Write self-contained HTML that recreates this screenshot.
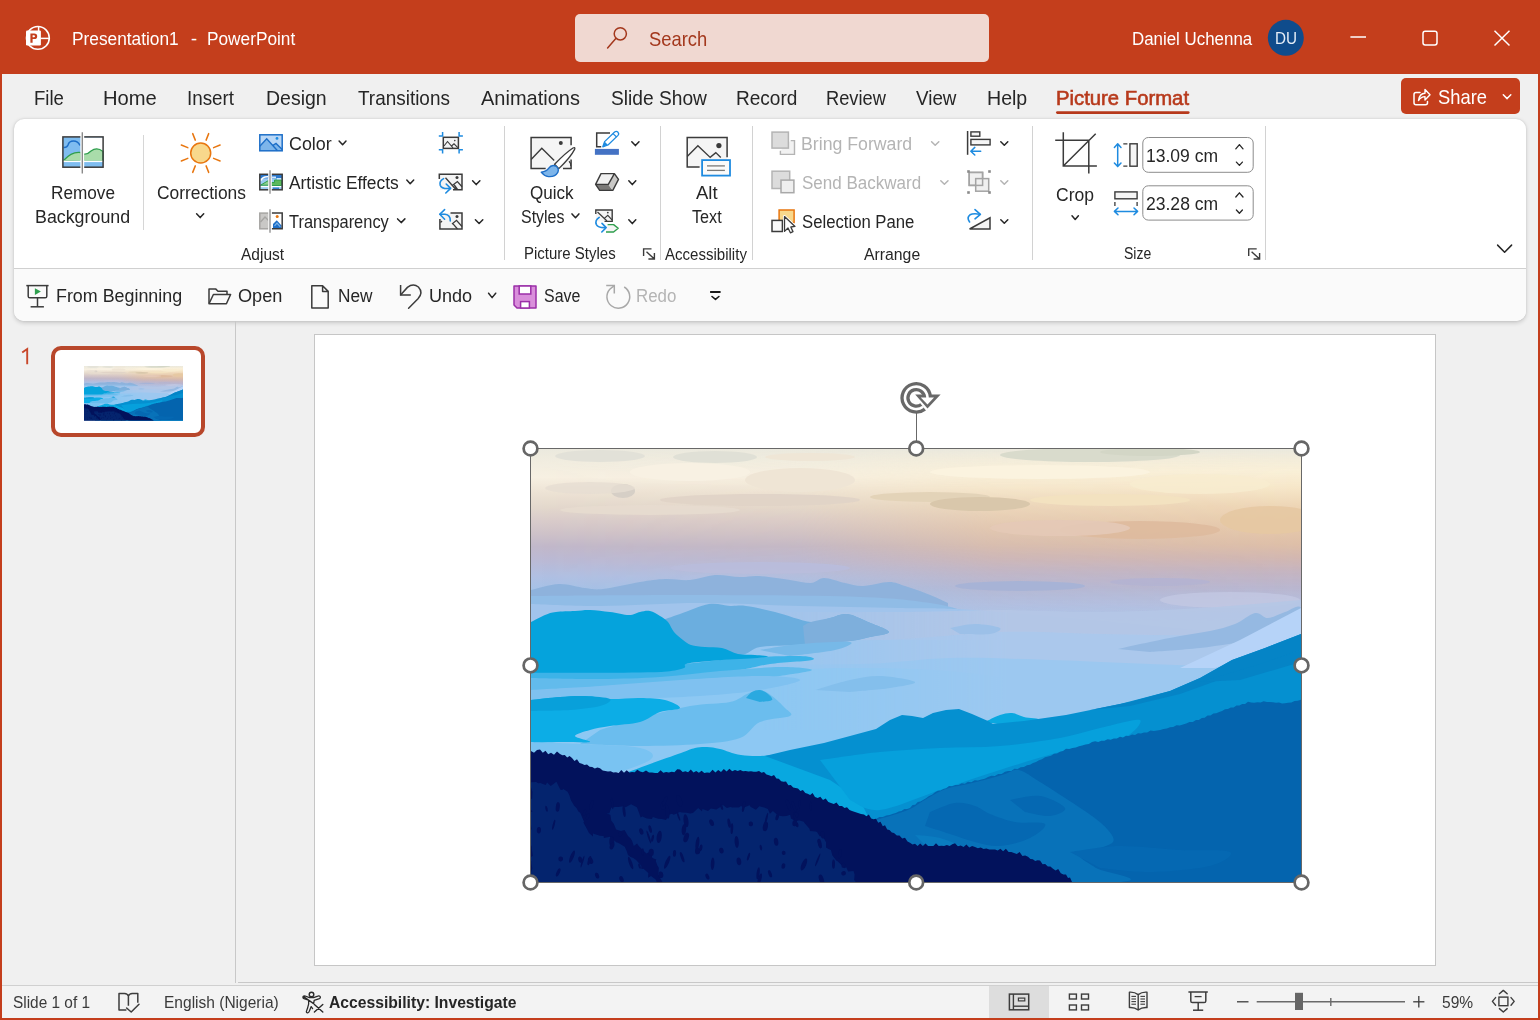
<!DOCTYPE html>
<html><head><meta charset="utf-8"><title>PowerPoint</title>
<style>
*{box-sizing:border-box;margin:0;padding:0}
html,body{width:1540px;height:1020px;overflow:hidden;background:#f0f0f0;font-family:"Liberation Sans",sans-serif;color:#262626}
.a{position:absolute}
.t{position:absolute;white-space:pre;line-height:1;transform-origin:0 0}
#win{position:absolute;left:0;top:0;width:1540px;height:1020px;background:#f0f0f0;overflow:hidden}
#title{left:0;top:0;width:1540px;height:74px;background:#c43e1c}
#search{left:575px;top:14px;width:414px;height:48px;background:#f0d8d1;border-radius:5px}
#ribbon{left:14px;top:119px;width:1512px;height:202px;background:#fff;border-radius:10px;box-shadow:0 1.5px 4px rgba(0,0,0,.17),0 0 2px rgba(0,0,0,.10);overflow:hidden}
#qat{left:0;top:149px;width:1512px;height:53px;background:#fafafa;border-top:1px solid #d0d0d0}
#status{left:2px;top:985px;width:1536px;height:33px;background:#f3f3f3;border-top:1px solid #d0d0d0}
#slide{left:314px;top:334px;width:1122px;height:632px;background:#fff;border:1px solid #c6c6c6}
#thumb{left:51px;top:346px;width:154px;height:91px;background:#fff;border:4.3px solid #b8472b;border-radius:10px}
</style></head><body>
<div id="win">
<div id="title" class="a"></div>
<div id="search" class="a"></div>
<div id="ribbon" class="a"><div id="qat" class="a"></div></div>
<div class="a" style="left:235px;top:321px;width:1px;height:662px;background:#c8c8c8"></div>
<div class="a" style="left:238px;top:982px;width:1300px;height:1px;background:#c8c8c8"></div>
<div id="thumb" class="a"></div>
<svg class="a" style="left:84px;top:366.2px" width="99.2" height="54.8" viewBox="531 449 770 433" preserveAspectRatio="none"><use href="#picg"/></svg>
<div id="slide" class="a"></div>
<svg class="a" style="left:531px;top:449px" width="770" height="433" viewBox="531 449 770 433" preserveAspectRatio="none">
<defs>
<linearGradient id="sky" x1="0" y1="0" x2="0" y2="1">
<stop offset="0" stop-color="#ebe9de"/>
<stop offset="0.03" stop-color="#f1ede0"/>
<stop offset="0.065" stop-color="#f7f0e2"/>
<stop offset="0.10" stop-color="#ede3d5"/>
<stop offset="0.135" stop-color="#e3d8cd"/>
<stop offset="0.165" stop-color="#d9cccb"/>
<stop offset="0.195" stop-color="#cec2c9"/>
<stop offset="0.225" stop-color="#c1b8ca"/>
<stop offset="0.26" stop-color="#babad6"/>
<stop offset="0.295" stop-color="#b0c0e3"/>
<stop offset="0.33" stop-color="#a3c2e8"/>
<stop offset="0.40" stop-color="#a4c6ec"/>
<stop offset="0.50" stop-color="#9ac7f0"/>
<stop offset="0.62" stop-color="#8dc8f3"/>
<stop offset="1" stop-color="#86c6f3"/>
</linearGradient>
<linearGradient id="warmv" x1="0" y1="0" x2="0" y2="1">
<stop offset="0" stop-color="#f7ecd0" stop-opacity="0"/>
<stop offset="0.05" stop-color="#f9efd6" stop-opacity="0.9"/>
<stop offset="0.09" stop-color="#f6e6c8" stop-opacity="1"/>
<stop offset="0.13" stop-color="#eed6b6" stop-opacity="1"/>
<stop offset="0.18" stop-color="#e6c8aa" stop-opacity="1"/>
<stop offset="0.22" stop-color="#debfa8" stop-opacity="1"/>
<stop offset="0.25" stop-color="#d4b7ae" stop-opacity="0.95"/>
<stop offset="0.285" stop-color="#c6b3bd" stop-opacity="0.9"/>
<stop offset="0.32" stop-color="#bdb4ca" stop-opacity="0.85"/>
<stop offset="0.36" stop-color="#babddb" stop-opacity="0.8"/>
<stop offset="0.42" stop-color="#b0c8ea" stop-opacity="0.6"/>
<stop offset="0.5" stop-color="#a4c8ee" stop-opacity="0"/>
</linearGradient>
<linearGradient id="warmh" x1="0" y1="0" x2="1" y2="0">
<stop offset="0" stop-color="#fff" stop-opacity="0"/>
<stop offset="0.35" stop-color="#fff" stop-opacity="0.15"/>
<stop offset="0.6" stop-color="#fff" stop-opacity="0.8"/>
<stop offset="1" stop-color="#fff" stop-opacity="1"/>
</linearGradient>
<mask id="wm"><rect x="531" y="449" width="770" height="433" fill="url(#warmh)"/></mask>
<linearGradient id="rfade" x1="0" y1="0" x2="1" y2="0">
<stop offset="0.3" stop-color="#fff" stop-opacity="0"/>
<stop offset="0.62" stop-color="#fff" stop-opacity="1"/>
</linearGradient>
<mask id="rm"><rect x="531" y="449" width="770" height="433" fill="url(#rfade)"/></mask>
<clipPath id="pc"><rect x="531" y="449" width="770" height="433"/></clipPath>
</defs>
<g id="picg" clip-path="url(#pc)">
<rect x="531" y="449" width="770" height="433" fill="url(#sky)"/>
<rect x="531" y="449" width="770" height="433" fill="url(#warmv)" mask="url(#wm)"/>
<ellipse cx="600" cy="456" rx="45" ry="6" fill="#e2e1d8" opacity="1"/>
<ellipse cx="715" cy="457" rx="42" ry="6" fill="#e0e0d6" opacity="1"/>
<ellipse cx="810" cy="457" rx="45" ry="4" fill="#efe6d6" opacity="1"/>
<ellipse cx="1090" cy="455" rx="90" ry="7" fill="#d9dbcc" opacity="1"/>
<ellipse cx="1150" cy="452" rx="50" ry="4" fill="#d3d6c6" opacity="1"/>
<ellipse cx="690" cy="472" rx="60" ry="9" fill="#f8f1e3" opacity="1"/>
<ellipse cx="800" cy="480" rx="55" ry="12" fill="#efe5d5" opacity="1"/>
<ellipse cx="1040" cy="472" rx="110" ry="7" fill="#fbf3df" opacity="1"/>
<ellipse cx="623" cy="491" rx="12" ry="7" fill="#d6cfc6" opacity="1"/>
<ellipse cx="590" cy="488" rx="45" ry="6" fill="#e6ddd2" opacity="0.8"/>
<ellipse cx="760" cy="500" rx="100" ry="6" fill="#e0d3c6" opacity="0.9"/>
<ellipse cx="930" cy="497" rx="60" ry="5" fill="#e3d3b8" opacity="1"/>
<ellipse cx="980" cy="504" rx="50" ry="7" fill="#d9c7ab" opacity="1"/>
<ellipse cx="1110" cy="500" rx="80" ry="6" fill="#f3e2c0" opacity="1"/>
<ellipse cx="1200" cy="484" rx="70" ry="10" fill="#f7ecd0" opacity="0.8"/>
<ellipse cx="1140" cy="530" rx="80" ry="9" fill="#deba9d" opacity="0.9"/>
<ellipse cx="1270" cy="520" rx="50" ry="14" fill="#e6c8a2" opacity="0.9"/>
<ellipse cx="1060" cy="528" rx="70" ry="8" fill="#e4c9b7" opacity="0.9"/>
<ellipse cx="650" cy="510" rx="90" ry="5" fill="#e7dccf" opacity="0.9"/>
<ellipse cx="1020" cy="586" rx="65" ry="5" fill="#a5b2d6" opacity="0.9"/>
<ellipse cx="1160" cy="582" rx="50" ry="4" fill="#b3b3d2" opacity="0.8"/>
<ellipse cx="760" cy="568" rx="90" ry="6" fill="#b9bcdc" opacity="0.9"/>
<ellipse cx="1230" cy="600" rx="70" ry="8" fill="#c3c8e2" opacity="0.8"/>
<path d="M531.0,590.0 C535.7,589.0 550.0,584.3 559.0,584.0 C568.0,583.7 577.7,587.2 585.0,588.0 C592.3,588.8 593.8,590.0 603.0,589.0 C612.2,588.0 629.7,583.7 640.0,582.0 C650.3,580.3 656.7,579.3 665.0,579.0 C673.3,578.7 681.7,580.7 690.0,580.0 C698.3,579.3 706.7,575.5 715.0,575.0 C723.3,574.5 732.7,576.8 740.0,577.0 C747.3,577.2 750.7,575.5 759.0,576.0 C767.3,576.5 781.3,578.8 790.0,580.0 C798.7,581.2 805.3,583.3 811.0,583.0 C816.7,582.7 818.3,578.0 824.0,578.0 C829.7,578.0 838.5,581.7 845.0,583.0 C851.5,584.3 855.7,586.2 863.0,586.0 C870.3,585.8 882.0,582.0 889.0,582.0 C896.0,582.0 899.8,584.5 905.0,586.0 C910.2,587.5 915.0,589.2 920.0,591.0 C925.0,592.8 930.3,595.0 935.0,597.0 C939.7,599.0 945.8,602.0 948.0,603.0 L948.0,612 L531.0,612 Z" fill="#8eb2dc" />
<path d="M531.0,596.0 C559.2,595.8 645.2,594.8 700.0,595.0 C754.8,595.2 821.7,595.7 860.0,597.0 C898.3,598.3 912.5,600.7 930.0,603.0 C947.5,605.3 959.2,609.7 965.0,611.0 L965.0,614 L531.0,614 Z" fill="#90bce6" />
<path d="M531.0,604.0 C542.5,604.3 571.8,606.2 600.0,606.0 C628.2,605.8 666.7,603.0 700.0,603.0 C733.3,603.0 766.7,605.2 800.0,606.0 C833.3,606.8 866.7,607.0 900.0,608.0 C933.3,609.0 933.2,606.7 1000.0,612.0 C1066.8,617.3 1250.8,635.3 1301.0,640.0 L1301.0,640 L531.0,640 Z" fill="#a1c4ec" />
<rect x="531" y="640" width="770" height="140" fill="#97c6f0"/>
<path d="M531.0,680.0 C550.8,679.7 613.5,679.3 650.0,678.0 C686.5,676.7 716.7,673.7 750.0,672.0 C783.3,670.3 815.0,668.0 850.0,668.0 C885.0,668.0 918.3,668.3 960.0,672.0 C1001.7,675.7 1043.2,687.0 1100.0,690.0 C1156.8,693.0 1267.5,690.0 1301.0,690.0 L1301.0,780 L531.0,780 Z" fill="#8dc8f3" />
<g mask="url(#rm)">
<path d="M531.0,612.0 C559.2,612.0 638.5,612.0 700.0,612.0 C761.5,612.0 850.0,612.3 900.0,612.0 C950.0,611.7 966.7,610.0 1000.0,610.0 C1033.3,610.0 1066.7,612.3 1100.0,612.0 C1133.3,611.7 1166.5,610.0 1200.0,608.0 C1233.5,606.0 1284.2,601.3 1301.0,600.0 L1301.0,700 L531.0,700 Z" fill="#b5c6e6" opacity="0.9"/>
<path d="M531.0,640.0 C559.2,640.0 641.8,640.0 700.0,640.0 C758.2,640.0 830.0,641.3 880.0,640.0 C930.0,638.7 963.3,633.0 1000.0,632.0 C1036.7,631.0 1066.7,633.3 1100.0,634.0 C1133.3,634.7 1166.5,635.0 1200.0,636.0 C1233.5,637.0 1284.2,639.3 1301.0,640.0 L1301.0,700 L531.0,700 Z" fill="#abc8ec" />
<path d="M531.0,664.0 C559.2,664.0 645.2,664.0 700.0,664.0 C754.8,664.0 818.3,665.0 860.0,664.0 C901.7,663.0 918.3,658.7 950.0,658.0 C981.7,657.3 1016.7,659.0 1050.0,660.0 C1083.3,661.0 1116.7,662.7 1150.0,664.0 C1183.3,665.3 1224.8,667.0 1250.0,668.0 C1275.2,669.0 1292.5,669.7 1301.0,670.0 L1301.0,730 L531.0,730 Z" fill="#9cc8f0" />
</g>
<path d="M1118.0,649.0 C1123.3,647.8 1139.7,644.2 1150.0,642.0 C1160.3,639.8 1170.0,637.8 1180.0,636.0 C1190.0,634.2 1200.8,633.0 1210.0,631.0 C1219.2,629.0 1227.5,627.0 1235.0,624.0 C1242.5,621.0 1249.5,614.0 1255.0,613.0 C1260.5,612.0 1263.0,618.2 1268.0,618.0 C1273.0,617.8 1279.5,613.7 1285.0,612.0 C1290.5,610.3 1298.3,603.3 1301.0,608.0 C1303.7,612.7 1307.8,634.7 1301.0,640.0 C1294.2,645.3 1276.8,638.7 1260.0,640.0 C1243.2,641.3 1218.3,646.0 1200.0,648.0 C1181.7,650.0 1158.3,651.3 1150.0,652.0 Z" fill="#95b9e2" />
<path d="M950.0,628.0 C954.2,627.3 966.7,624.0 975.0,624.0 C983.3,624.0 997.5,626.3 1000.0,628.0 C1002.5,629.7 996.7,633.0 990.0,634.0 C983.3,635.0 965.0,634.0 960.0,634.0 Z" fill="#9cc0e8" />
<polygon points="1301.0,608.0 1301.0,640.0 1215.0,668.0 1180.0,668.0 1240.0,640.0" fill="#b6d3f8" />
<path d="M660.0,621.0 C663.3,619.8 671.8,616.8 680.0,614.0 C688.2,611.2 700.7,605.3 709.0,604.0 C717.3,602.7 723.8,605.7 730.0,606.0 C736.2,606.3 738.5,605.0 746.0,606.0 C753.5,607.0 764.2,609.3 775.0,612.0 C785.8,614.7 801.8,621.0 811.0,622.0 C820.2,623.0 824.0,619.3 830.0,618.0 C836.0,616.7 840.7,613.3 847.0,614.0 C853.3,614.7 861.0,619.0 868.0,622.0 C875.0,625.0 888.7,629.5 889.0,632.0 C889.3,634.5 876.5,635.5 870.0,637.0 C863.5,638.5 861.7,639.7 850.0,641.0 C838.3,642.3 815.0,644.0 800.0,645.0 C785.0,646.0 770.0,645.3 760.0,647.0 C750.0,648.7 750.0,654.5 740.0,655.0 C730.0,655.5 710.0,652.5 700.0,650.0 C690.0,647.5 683.3,641.7 680.0,640.0 Z" fill="#6baedf" />
<path d="M803.0,626.0 C804.3,625.3 806.5,623.3 811.0,622.0 C815.5,620.7 824.0,619.3 830.0,618.0 C836.0,616.7 840.7,613.3 847.0,614.0 C853.3,614.7 861.0,619.0 868.0,622.0 C875.0,625.0 888.7,629.5 889.0,632.0 C889.3,634.5 876.5,635.5 870.0,637.0 C863.5,638.5 860.8,639.7 850.0,641.0 C839.2,642.3 812.5,644.3 805.0,645.0 Z" fill="#7eafdc" />
<path d="M760.0,650.0 C766.7,649.0 785.0,645.3 800.0,644.0 C815.0,642.7 844.2,641.0 850.0,642.0 C855.8,643.0 845.0,647.7 835.0,650.0 C825.0,652.3 797.5,655.0 790.0,656.0 Z" fill="#77b9e8" />
<path d="M531.0,664.0 C542.5,664.3 575.2,666.0 600.0,666.0 C624.8,666.0 656.7,665.3 680.0,664.0 C703.3,662.7 720.0,659.3 740.0,658.0 C760.0,656.7 788.0,655.7 800.0,656.0 C812.0,656.3 817.0,658.7 812.0,660.0 C807.0,661.3 782.0,662.3 770.0,664.0 C758.0,665.7 751.7,668.3 740.0,670.0 C728.3,671.7 713.3,672.5 700.0,674.0 C686.7,675.5 676.7,677.8 660.0,679.0 C643.3,680.2 621.5,680.7 600.0,681.0 C578.5,681.3 542.5,681.0 531.0,681.0 Z" fill="#3db3e8" />
<path d="M531.0,678.0 C542.5,678.2 578.5,679.2 600.0,679.0 C621.5,678.8 640.0,678.3 660.0,677.0 C680.0,675.7 700.0,672.7 720.0,671.0 C740.0,669.3 764.7,667.2 780.0,667.0 C795.3,666.8 812.0,668.5 812.0,670.0 C812.0,671.5 792.8,673.8 780.0,676.0 C767.2,678.2 748.3,681.3 735.0,683.0 C721.7,684.7 722.5,684.8 700.0,686.0 C677.5,687.2 628.2,689.3 600.0,690.0 C571.8,690.7 542.5,690.0 531.0,690.0 Z" fill="#62bbec" />
<path d="M531.0,622.0 C533.3,620.8 540.8,616.7 545.0,615.0 C549.2,613.3 551.0,612.7 556.0,612.0 C561.0,611.3 569.3,611.3 575.0,611.0 C580.7,610.7 584.2,609.8 590.0,610.0 C595.8,610.2 603.5,611.2 610.0,612.0 C616.5,612.8 624.0,615.0 629.0,615.0 C634.0,615.0 636.5,612.7 640.0,612.0 C643.5,611.3 646.7,610.3 650.0,611.0 C653.3,611.7 657.0,614.2 660.0,616.0 C663.0,617.8 665.7,619.3 668.0,622.0 C670.3,624.7 671.5,629.0 674.0,632.0 C676.5,635.0 680.2,637.8 683.0,640.0 C685.8,642.2 687.3,643.8 691.0,645.0 C694.7,646.2 699.8,646.5 705.0,647.0 C710.2,647.5 716.5,646.8 722.0,648.0 C727.5,649.2 732.5,652.8 738.0,654.0 C743.5,655.2 750.0,654.6 755.0,655.0 C760.0,655.4 768.8,655.9 768.0,656.5 C767.2,657.1 756.7,658.0 750.0,658.5 C743.3,659.0 735.7,659.0 728.0,659.5 C720.3,660.0 711.0,660.9 704.0,661.6 C697.0,662.4 689.3,662.9 686.0,664.0 C682.7,665.1 687.2,666.8 684.0,668.0 C680.8,669.2 674.3,670.8 667.0,671.5 C659.7,672.2 650.3,672.3 640.0,672.5 C629.7,672.7 618.3,672.7 605.0,672.7 C591.7,672.7 572.3,672.7 560.0,672.7 C547.7,672.7 535.8,672.7 531.0,672.7 Z" fill="#05a3dc" />
<path d="M531.0,690.0 C542.5,689.3 575.2,687.7 600.0,686.0 C624.8,684.3 653.3,681.7 680.0,680.0 C706.7,678.3 740.0,676.0 760.0,676.0 C780.0,676.0 800.0,677.7 800.0,680.0 C800.0,682.3 776.7,687.3 760.0,690.0 C743.3,692.7 726.7,694.3 700.0,696.0 C673.3,697.7 628.2,699.0 600.0,700.0 C571.8,701.0 542.5,701.7 531.0,702.0 Z" fill="#7fc1f0" />
<path d="M600.0,730.0 C606.7,728.0 625.0,722.0 640.0,718.0 C655.0,714.0 675.0,708.7 690.0,706.0 C705.0,703.3 720.5,704.0 730.0,702.0 C739.5,700.0 742.0,696.0 747.0,694.0 C752.0,692.0 755.8,689.7 760.0,690.0 C764.2,690.3 767.8,693.0 772.0,696.0 C776.2,699.0 782.0,704.7 785.0,708.0 C788.0,711.3 794.2,713.7 790.0,716.0 C785.8,718.3 768.3,718.3 760.0,722.0 C751.7,725.7 750.0,734.3 740.0,738.0 C730.0,741.7 716.7,742.7 700.0,744.0 C683.3,745.3 660.0,746.0 640.0,746.0 C620.0,746.0 590.0,744.3 580.0,744.0 Z" fill="#6bbdee" />
<path d="M746.0,698.0 C747.0,697.0 749.7,693.3 752.0,692.0 C754.3,690.7 757.3,689.7 760.0,690.0 C762.7,690.3 766.0,692.3 768.0,694.0 C770.0,695.7 773.3,698.7 772.0,700.0 C770.7,701.3 762.0,701.7 760.0,702.0 Z" fill="#2aa9e0" />
<path d="M815.0,690.0 C820.8,688.3 839.2,682.3 850.0,680.0 C860.8,677.7 869.2,675.7 880.0,676.0 C890.8,676.3 913.3,680.0 915.0,682.0 C916.7,684.0 900.8,686.3 890.0,688.0 C879.2,689.7 856.7,691.3 850.0,692.0 Z" fill="#84bfec" />
<path d="M531.0,700.0 C535.8,699.5 551.0,697.7 560.0,697.0 C569.0,696.3 576.7,695.7 585.0,696.0 C593.3,696.3 600.8,698.7 610.0,699.0 C619.2,699.3 630.8,697.8 640.0,698.0 C649.2,698.2 658.3,698.3 665.0,700.0 C671.7,701.7 680.8,706.0 680.0,708.0 C679.2,710.0 666.7,709.7 660.0,712.0 C653.3,714.3 648.3,719.7 640.0,722.0 C631.7,724.3 618.3,724.7 610.0,726.0 C601.7,727.3 595.8,728.3 590.0,730.0 C584.2,731.7 575.0,734.0 575.0,736.0 C575.0,738.0 592.5,741.0 590.0,742.0 C587.5,743.0 569.8,741.8 560.0,742.0 C550.2,742.2 535.8,742.8 531.0,743.0 Z" fill="#0cade6" />
<path d="M531.0,700.0 C535.8,699.5 551.0,697.7 560.0,697.0 C569.0,696.3 576.7,695.7 585.0,696.0 C593.3,696.3 607.5,697.3 610.0,699.0 C612.5,700.7 606.7,704.2 600.0,706.0 C593.3,707.8 581.5,709.2 570.0,710.0 C558.5,710.8 537.5,710.8 531.0,711.0 Z" fill="#08a0da" />
<path d="M531.0,742.0 C539.2,742.3 561.8,743.0 580.0,744.0 C598.2,745.0 628.3,745.3 640.0,748.0 C651.7,750.7 656.7,755.5 650.0,760.0 C643.3,764.5 619.8,773.3 600.0,775.0 C580.2,776.7 542.5,770.8 531.0,770.0 Z" fill="#79c3f2" />
<path d="M620.0,775.0 C625.0,773.2 639.8,767.7 650.0,764.0 C660.2,760.3 673.5,755.7 681.0,753.0 C688.5,750.3 690.7,749.0 695.0,748.0 C699.3,747.0 702.8,746.8 707.0,747.0 C711.2,747.2 714.3,747.7 720.0,749.0 C725.7,750.3 732.3,754.0 741.0,755.0 C749.7,756.0 758.2,756.7 772.0,755.0 C785.8,753.3 806.7,749.0 824.0,745.0 C841.3,741.0 858.3,734.8 876.0,731.0 C893.7,727.2 909.3,722.8 930.0,722.0 C950.7,721.2 971.7,726.3 1000.0,726.0 C1028.3,725.7 1049.8,726.0 1100.0,720.0 C1150.2,714.0 1267.5,663.0 1301.0,690.0 C1334.5,717.0 1414.5,850.0 1301.0,882.0 C1187.5,914.0 733.5,882.0 620.0,882.0 Z" fill="#08a8e0" />
<path d="M985.0,722.0 C987.5,720.8 995.5,716.5 1000.0,715.0 C1004.5,713.5 1008.0,712.7 1012.0,713.0 C1016.0,713.3 1019.3,715.8 1024.0,717.0 C1028.7,718.2 1042.3,718.5 1040.0,720.0 C1037.7,721.5 1015.0,725.0 1010.0,726.0 Z" fill="#0aa8e0" />
<polygon points="765.0,756.0 790.0,750.0 824.0,743.0 850.0,736.0 876.0,729.0 890.0,720.0 902.0,715.0 912.0,716.0 923.0,718.0 933.0,713.0 946.0,710.0 959.0,709.0 972.0,714.0 988.0,721.0 993.0,724.0 1024.0,721.0 1066.0,715.0 1120.0,704.0 1170.0,691.0 1200.0,678.0 1232.0,660.0 1265.0,648.0 1301.0,634.0 1301.0,882.0 900.0,882.0 860.0,800.0 830.0,780.0" fill="#0590d0" />
<polygon points="1301.0,634.0 1265.0,648.0 1232.0,660.0 1200.0,678.0 1170.0,691.0 1130.0,702.0 1090.0,710.0 1130.0,706.0 1180.0,694.0 1230.0,676.0 1301.0,650.0" fill="#0584c6" />
<polygon points="1301.0,650.0 1260.0,664.0 1200.0,682.0 1240.0,680.0 1301.0,662.0" fill="#0584c6" />
<path d="M820.0,760.0 C830.0,758.7 860.0,754.0 880.0,752.0 C900.0,750.0 920.0,749.0 940.0,748.0 C960.0,747.0 980.0,747.7 1000.0,746.0 C1020.0,744.3 1043.3,741.0 1060.0,738.0 C1076.7,735.0 1086.7,731.0 1100.0,728.0 C1113.3,725.0 1136.7,718.0 1140.0,720.0 C1143.3,722.0 1133.3,734.7 1120.0,740.0 C1106.7,745.3 1080.0,747.0 1060.0,752.0 C1040.0,757.0 1020.0,763.7 1000.0,770.0 C980.0,776.3 960.0,783.3 940.0,790.0 C920.0,796.7 895.0,808.3 880.0,810.0 C865.0,811.7 855.0,801.7 850.0,800.0 Z" fill="#06a0dc" />
<polygon points="1301.0,699.7 1297.8,700.8 1294.6,700.9 1291.4,702.4 1288.2,702.7 1285.0,703.2 1282.0,703.6 1279.0,702.4 1276.0,702.8 1273.0,702.3 1270.0,702.0 1266.9,702.1 1263.7,701.2 1260.6,702.4 1257.4,702.2 1254.3,702.7 1251.1,702.6 1248.0,701.7 1245.1,703.9 1242.2,704.1 1239.4,705.6 1236.5,705.4 1233.6,707.4 1230.8,707.6 1227.9,709.1 1225.0,709.2 1222.1,711.1 1219.2,712.0 1216.3,713.3 1213.4,713.6 1210.5,715.5 1207.6,715.5 1204.7,717.7 1201.8,718.1 1198.9,719.9 1196.0,720.0 1192.8,721.9 1189.5,721.9 1186.2,723.6 1183.0,724.4 1179.8,725.4 1176.5,725.3 1173.2,727.1 1170.0,727.2 1166.8,728.6 1163.5,728.9 1160.2,729.9 1157.0,730.5 1153.8,731.1 1150.5,730.6 1147.2,732.4 1144.0,732.4 1141.0,733.6 1138.0,733.3 1135.0,734.9 1132.0,734.4 1129.0,736.1 1126.0,735.8 1123.0,737.4 1120.0,736.8 1116.9,738.6 1113.8,738.6 1110.7,739.7 1107.6,739.2 1104.4,740.8 1101.3,740.8 1098.2,741.9 1095.1,741.2 1092.0,741.9 1088.8,743.9 1085.5,744.6 1082.2,745.6 1079.0,746.3 1075.8,747.4 1072.5,748.0 1069.2,749.1 1066.0,748.7 1063.0,751.1 1060.0,751.7 1057.0,753.4 1054.0,753.8 1051.0,755.7 1048.0,756.5 1045.0,757.3 1042.0,759.3 1039.0,760.2 1036.0,762.0 1033.0,762.9 1030.0,764.7 1027.0,765.2 1023.9,767.0 1020.7,767.2 1017.6,769.0 1014.4,768.8 1011.3,771.0 1008.1,771.1 1005.0,771.8 1001.6,774.0 998.2,773.9 994.8,776.0 991.4,775.7 988.0,777.1 984.7,778.8 981.3,779.5 978.0,780.5 974.7,780.2 971.3,782.2 968.0,781.7 964.8,783.7 961.7,783.2 958.5,785.0 955.3,784.9 952.2,786.3 949.0,786.1 946.2,788.2 943.4,789.1 940.6,790.6 937.8,790.7 935.0,792.3 932.0,794.8 929.0,796.1 926.0,798.2 923.0,799.9 920.4,801.6 917.8,802.1 915.2,804.8 912.6,805.1 910.0,807.9 907.2,809.0 904.3,809.0 901.5,811.0 898.7,811.5 895.8,813.0 893.0,813.8 889.6,815.0 886.2,815.6 882.8,817.0 879.4,817.0 876.0,819.0 876.0,882.0 1301.0,882.0" fill="#0464ae" />
<path d="M876.0,820.0 C878.8,819.2 887.3,816.8 893.0,815.0 C898.7,813.2 905.0,811.3 910.0,809.0 C915.0,806.7 918.8,803.5 923.0,801.0 C927.2,798.5 930.7,796.2 935.0,794.0 C939.3,791.8 943.5,789.7 949.0,788.0 C954.5,786.3 961.5,785.5 968.0,784.0 C974.5,782.5 981.8,780.7 988.0,779.0 C994.2,777.3 999.8,775.5 1005.0,774.0 C1010.2,772.5 1013.2,768.7 1019.0,770.0 C1024.8,771.3 1032.8,777.7 1040.0,782.0 C1047.2,786.3 1053.3,790.3 1062.0,796.0 C1070.7,801.7 1084.3,810.3 1092.0,816.0 C1099.7,821.7 1104.5,825.7 1108.0,830.0 C1111.5,834.3 1115.2,838.7 1113.0,842.0 C1110.8,845.3 1100.5,847.7 1095.0,850.0 C1089.5,852.3 1079.8,853.0 1080.0,856.0 C1080.2,859.0 1089.7,863.7 1096.0,868.0 C1102.3,872.3 1154.7,879.7 1118.0,882.0 C1081.3,884.3 916.3,882.0 876.0,882.0 Z" fill="#0872b9" />
<path d="M930.0,812.0 C934.2,810.5 947.5,804.0 955.0,803.0 C962.5,802.0 969.2,804.2 975.0,806.0 C980.8,807.8 983.3,811.3 990.0,814.0 C996.7,816.7 1005.8,820.3 1015.0,822.0 C1024.2,823.7 1042.5,821.3 1045.0,824.0 C1047.5,826.7 1037.5,834.3 1030.0,838.0 C1022.5,841.7 1009.2,845.3 1000.0,846.0 C990.8,846.7 983.3,844.0 975.0,842.0 C966.7,840.0 958.3,836.7 950.0,834.0 C941.7,831.3 929.2,827.3 925.0,826.0 Z" fill="#0568b2" />
<path d="M1010.0,800.0 C1015.0,799.3 1030.8,794.7 1040.0,796.0 C1049.2,797.3 1063.3,804.7 1065.0,808.0 C1066.7,811.3 1056.7,815.3 1050.0,816.0 C1043.3,816.7 1029.2,812.7 1025.0,812.0 Z" fill="#0568b2" />
<path d="M915.0,835.0 C919.2,835.5 931.7,835.8 940.0,838.0 C948.3,840.2 957.5,844.7 965.0,848.0 C972.5,851.3 985.8,855.7 985.0,858.0 C984.2,860.3 969.2,863.3 960.0,862.0 C950.8,860.7 935.0,852.0 930.0,850.0 Z" fill="#0a7cc0" />
<path d="M1070.0,852.0 C1078.3,851.0 1101.7,846.3 1120.0,846.0 C1138.3,845.7 1161.7,849.0 1180.0,850.0 C1198.3,851.0 1225.0,849.3 1230.0,852.0 C1235.0,854.7 1223.3,862.7 1210.0,866.0 C1196.7,869.3 1168.3,871.7 1150.0,872.0 C1131.7,872.3 1108.3,868.7 1100.0,868.0 Z" fill="#0568b2" />
<polygon points="531.0,751.1 534.0,752.7 537.0,750.1 540.0,749.6 542.8,752.8 545.5,750.7 548.2,754.2 551.0,752.8 554.0,754.7 557.0,751.6 560.0,753.9 562.4,755.2 564.8,755.0 567.2,757.6 569.6,756.0 572.0,758.1 574.5,761.0 577.0,759.3 579.5,763.0 582.0,763.7 584.5,765.0 587.0,764.6 589.6,766.8 592.2,766.9 594.8,768.4 597.4,767.6 600.0,768.3 602.7,770.5 605.3,771.0 608.0,771.5 610.7,771.3 613.3,772.5 616.0,772.2 618.7,772.9 621.3,770.0 624.0,772.7 626.7,770.3 629.3,772.4 632.0,771.9 634.7,772.2 637.3,769.7 640.0,771.6 643.0,772.2 646.0,770.5 649.0,772.6 652.0,772.4 655.0,773.0 657.8,772.9 660.6,770.2 663.3,772.7 666.1,771.9 668.9,772.4 671.7,771.7 674.4,772.2 677.2,769.2 680.0,769.4 682.7,772.1 685.4,771.3 688.1,772.3 690.8,769.5 693.5,772.5 696.2,771.0 698.9,772.7 701.6,770.8 704.3,772.9 707.0,772.4 709.8,772.8 712.6,769.8 715.4,772.4 718.2,770.1 721.0,772.0 723.8,768.9 726.6,771.6 729.4,768.7 732.2,771.2 735.0,770.1 737.7,771.1 740.3,770.1 743.0,771.3 745.7,770.9 748.3,771.6 751.0,771.2 753.7,771.8 756.3,771.7 759.0,771.1 761.5,772.8 764.0,771.9 766.5,774.5 769.0,775.3 771.5,776.2 774.0,775.0 776.4,778.4 778.8,778.8 781.2,781.2 783.6,781.7 786.0,781.5 788.4,785.2 790.8,785.0 793.2,787.6 795.6,787.9 798.0,788.6 800.4,791.0 802.9,789.9 805.3,793.0 807.7,793.8 810.1,795.0 812.6,793.1 815.0,796.9 817.7,798.0 820.3,796.8 823.0,800.0 825.7,798.5 828.3,802.0 831.0,802.9 833.8,804.0 836.5,802.6 839.2,806.0 842.0,805.9 844.5,808.0 847.0,807.3 849.5,810.0 852.0,811.0 855.0,812.0 858.0,812.9 861.0,814.0 864.0,814.5 866.4,816.2 868.8,814.5 871.2,818.6 873.6,819.2 876.0,818.7 878.2,822.8 880.5,821.7 882.8,826.2 885.0,825.2 887.2,829.5 889.5,830.0 891.8,832.5 894.0,832.9 896.8,835.5 899.5,835.4 902.2,838.5 905.0,837.7 907.5,841.5 910.0,842.7 912.5,844.5 915.0,843.8 917.6,846.0 920.2,843.6 922.9,846.0 925.5,843.4 928.1,846.0 930.8,845.9 933.4,846.0 936.0,843.2 938.7,846.0 941.4,845.7 944.1,846.0 946.9,845.0 949.6,846.0 952.3,844.2 955.0,843.2 957.9,846.3 960.7,845.6 963.6,846.9 966.4,844.4 969.3,847.4 972.1,846.1 975.0,847.1 977.9,848.3 980.7,847.6 983.6,848.9 986.4,848.6 989.3,849.4 992.1,849.5 995.0,849.6 997.7,850.4 1000.4,848.8 1003.1,851.3 1005.9,848.7 1008.6,852.1 1011.3,852.1 1014.0,852.9 1016.8,854.0 1019.6,852.0 1022.4,856.0 1025.2,855.4 1028.0,856.8 1030.4,859.0 1032.8,859.3 1035.2,861.0 1037.6,860.2 1040.0,860.5 1042.6,864.2 1045.2,864.0 1047.8,866.6 1050.4,866.5 1053.0,868.8 1055.6,870.4 1058.2,869.1 1060.8,873.2 1063.4,874.5 1066.0,874.5 1068.0,878.0 1070.0,877.5 1072.0,882.0 1072.0,882.0 531.0,882.0" fill="#02125c" />
<clipPath id="fc"><polygon points="531.0,753.0 540.0,752.0 551.0,755.0 560.0,754.0 572.0,760.0 587.0,766.0 600.0,770.0 616.0,773.0 640.0,772.0 655.0,773.0 680.0,772.0 707.0,773.0 735.0,771.0 759.0,772.0 774.0,777.0 786.0,784.0 798.0,790.0 815.0,797.0 831.0,803.0 842.0,807.0 852.0,811.0 864.0,815.0 876.0,821.0 885.0,828.0 894.0,834.0 905.0,840.0 915.0,846.0 936.0,846.0 955.0,846.0 975.0,848.0 995.0,850.0 1014.0,853.0 1028.0,858.0 1040.0,863.0 1053.0,869.0 1066.0,876.0 1072.0,882.0 1072.0,882.0 531.0,882.0"/></clipPath><g clip-path="url(#fc)">
<polygon points="530.8,782.3 536.1,782.1 538.1,783.2 540.4,783.1 545.6,785.1 547.2,782.6 550.7,785.9 556.4,781.7 560.4,789.7 562.2,790.1 563.3,788.9 567.6,791.7 569.4,795.2 570.8,800.0 574.2,805.8 576.5,808.0 578.4,811.6 580.2,812.7 583.4,820.3 584.1,821.9 583.4,822.3 584.6,824.7 587.5,829.9 589.0,833.1 593.0,836.6 593.0,833.5 599.8,835.8 603.6,836.0 603.9,838.1 610.0,836.7 611.0,837.8 616.9,842.8 616.7,842.2 619.4,843.5 624.7,846.7 626.6,850.8 628.0,855.0 630.6,856.9 633.3,858.0 636.1,859.9 641.3,865.8 641.4,869.0 643.5,868.7 648.3,872.9 648.1,877.8 651.0,876.1 655.4,879.2 656.2,880.4 657.9,886.2 654.9,886.3 651.8,885.4 650.3,885.6 645.4,887.9 640.4,883.6 639.5,887.6 633.5,883.8 631.7,888.3 626.2,888.4 625.1,886.3 619.9,883.3 614.9,888.5 612.1,886.9 608.6,887.6 606.2,884.4 601.2,887.0 597.2,884.0 595.4,887.8 592.0,884.4 589.6,883.9 582.8,884.3 580.7,883.0 576.2,884.9 574.1,883.5 569.7,888.0 568.4,886.6 563.8,886.2 558.2,882.9 554.2,888.1 553.1,888.5 547.1,886.5 545.2,887.1 541.0,888.7 536.6,886.0 535.4,888.1 531.9,886.9 532.1,884.6 530.5,879.6 532.4,877.2 530.7,873.1 532.3,868.2 531.4,863.5 531.3,861.3 529.5,857.9 532.8,855.8 531.8,849.2 531.8,846.8 530.8,844.8 529.5,840.7 529.3,836.2 530.9,830.4 531.7,828.4 531.4,827.4 530.1,818.4 530.3,818.8 529.9,812.2 532.5,811.5 530.8,809.4 530.4,804.4 529.9,799.4 532.1,798.8 532.4,792.0 531.3,788.0 529.7,785.5" fill="#04246e" />
<polygon points="606.3,813.7 609.4,813.2 611.3,807.5 615.5,807.1 618.2,806.9 623.2,806.3 625.6,807.3 631.5,803.9 631.1,804.3 636.9,807.2 639.2,813.3 640.6,817.5 642.4,816.4 646.9,818.6 651.8,819.1 652.9,817.1 658.2,818.7 661.8,819.1 666.0,820.1 669.1,814.7 671.9,813.8 673.8,814.7 679.9,812.1 681.9,812.4 686.9,812.8 690.1,813.5 692.9,813.0 698.2,808.1 701.9,811.2 702.5,808.9 708.0,811.1 710.8,808.6 716.3,809.4 720.3,806.9 722.9,804.9 726.9,808.1 730.3,807.0 732.4,807.6 738.9,807.6 741.0,805.9 743.9,807.6 749.6,805.3 750.5,806.8 755.9,809.8 759.3,806.3 764.2,807.5 767.9,809.1 769.9,813.8 772.9,811.0 778.0,815.4 782.7,816.3 786.6,816.1 790.1,814.8 791.0,818.5 794.8,820.7 799.6,820.6 803.8,821.8 804.7,823.2 809.5,828.8 810.0,831.0 815.6,831.5 817.0,832.0 819.7,836.3 822.7,835.9 826.0,842.3 826.0,847.5 828.5,849.1 830.9,850.0 832.4,855.5 836.7,861.1 837.0,860.8 839.4,863.1 844.7,868.3 846.3,867.3 848.1,871.6 853.5,871.1 854.6,874.6 854.2,879.9 857.6,884.6 852.9,886.4 848.5,887.1 845.1,885.7 842.0,883.9 839.5,885.3 835.5,885.2 832.5,883.6 827.8,886.5 825.9,885.9 823.2,886.3 819.7,884.1 815.8,887.5 812.9,884.6 807.2,888.2 803.4,888.7 802.3,883.5 796.5,887.0 793.0,883.3 791.6,885.2 787.9,883.4 783.0,886.8 778.2,883.9 777.0,888.1 774.6,883.4 769.4,887.2 765.9,886.8 761.3,883.1 757.5,882.9 755.6,885.8 752.1,883.6 747.2,883.9 746.1,888.6 742.9,883.3 736.3,888.4 734.2,887.3 730.2,885.5 727.4,885.3 724.2,882.8 721.1,887.7 715.7,885.4 714.2,885.1 708.8,883.7 706.4,882.8 704.3,887.5 700.1,887.8 696.3,885.1 692.7,885.7 690.6,887.5 684.5,888.1 682.7,887.3 679.5,885.1 676.3,888.0 672.0,887.3 668.8,885.1 665.1,883.1 662.5,882.1 660.1,878.0 661.1,876.2 658.4,874.8 658.8,867.7 657.5,865.7 655.8,861.3 656.3,859.4 652.4,858.0 650.5,851.4 646.4,853.6 642.3,849.5 638.7,846.1 637.1,843.4 633.8,846.1 632.1,840.9 630.7,838.5 628.0,836.1 624.5,829.9 620.9,831.1 616.1,829.4 613.7,823.8 611.3,820.8 610.4,815.1 609.1,814.2" fill="#04246e" />
<ellipse cx="700.9" cy="847.8" rx="1.5" ry="3.4" fill="#02125c" transform="rotate(8 700.9 847.8)"/>
<ellipse cx="711.6" cy="822.7" rx="2.1" ry="3.5" fill="#02125c" transform="rotate(-24 711.6 822.7)"/>
<ellipse cx="612.2" cy="803.4" rx="1.1" ry="5.8" fill="#02125c" transform="rotate(-6 612.2 803.4)"/>
<ellipse cx="817.7" cy="859.9" rx="0.9" ry="6.9" fill="#02125c" transform="rotate(22 817.7 859.9)"/>
<ellipse cx="558.2" cy="872.4" rx="1.6" ry="4.4" fill="#02125c" transform="rotate(24 558.2 872.4)"/>
<ellipse cx="611.8" cy="841.9" rx="2.5" ry="5.6" fill="#02125c" transform="rotate(-2 611.8 841.9)"/>
<ellipse cx="843.3" cy="865.3" rx="1.9" ry="2.6" fill="#02125c" transform="rotate(6 843.3 865.3)"/>
<ellipse cx="678.5" cy="816.3" rx="0.9" ry="4.6" fill="#02125c" transform="rotate(-19 678.5 816.3)"/>
<ellipse cx="674.5" cy="853.4" rx="1.6" ry="3.3" fill="#02125c" transform="rotate(4 674.5 853.4)"/>
<ellipse cx="667.2" cy="862.2" rx="1.8" ry="7.0" fill="#02125c" transform="rotate(23 667.2 862.2)"/>
<ellipse cx="766.3" cy="819.1" rx="1.0" ry="6.5" fill="#02125c" transform="rotate(14 766.3 819.1)"/>
<ellipse cx="731.9" cy="828.7" rx="1.3" ry="5.4" fill="#02125c" transform="rotate(3 731.9 828.7)"/>
<ellipse cx="721.4" cy="850.6" rx="2.2" ry="2.9" fill="#02125c" transform="rotate(-13 721.4 850.6)"/>
<ellipse cx="843.6" cy="873.3" rx="2.4" ry="2.2" fill="#02125c" transform="rotate(-22 843.6 873.3)"/>
<ellipse cx="620.3" cy="834.0" rx="1.9" ry="2.5" fill="#02125c" transform="rotate(2 620.3 834.0)"/>
<ellipse cx="557.8" cy="806.9" rx="2.0" ry="4.8" fill="#02125c" transform="rotate(7 557.8 806.9)"/>
<ellipse cx="652.6" cy="838.3" rx="1.2" ry="3.7" fill="#02125c" transform="rotate(12 652.6 838.3)"/>
<ellipse cx="799.1" cy="805.9" rx="1.0" ry="6.0" fill="#02125c" transform="rotate(6 799.1 805.9)"/>
<ellipse cx="777.2" cy="817.1" rx="1.6" ry="3.3" fill="#02125c" transform="rotate(15 777.2 817.1)"/>
<ellipse cx="651.2" cy="852.3" rx="2.6" ry="3.6" fill="#02125c" transform="rotate(2 651.2 852.3)"/>
<ellipse cx="770.0" cy="873.7" rx="1.6" ry="3.8" fill="#02125c" transform="rotate(-20 770.0 873.7)"/>
<ellipse cx="810.7" cy="806.3" rx="0.9" ry="4.8" fill="#02125c" transform="rotate(-1 810.7 806.3)"/>
<ellipse cx="750.9" cy="823.9" rx="2.2" ry="2.4" fill="#02125c" transform="rotate(-14 750.9 823.9)"/>
<ellipse cx="743.6" cy="806.5" rx="1.3" ry="5.6" fill="#02125c" transform="rotate(10 743.6 806.5)"/>
<ellipse cx="624.1" cy="811.4" rx="1.4" ry="5.6" fill="#02125c" transform="rotate(-7 624.1 811.4)"/>
<ellipse cx="572.0" cy="856.7" rx="1.8" ry="6.6" fill="#02125c" transform="rotate(22 572.0 856.7)"/>
<ellipse cx="822.7" cy="835.0" rx="2.2" ry="3.5" fill="#02125c" transform="rotate(-9 822.7 835.0)"/>
<ellipse cx="660.9" cy="874.8" rx="2.4" ry="3.2" fill="#02125c" transform="rotate(-7 660.9 874.8)"/>
<ellipse cx="650.2" cy="829.1" rx="1.5" ry="3.9" fill="#02125c" transform="rotate(-15 650.2 829.1)"/>
<ellipse cx="712.6" cy="863.8" rx="1.8" ry="6.2" fill="#02125c" transform="rotate(3 712.6 863.8)"/>
<ellipse cx="590.6" cy="860.7" rx="2.4" ry="3.4" fill="#02125c" transform="rotate(-24 590.6 860.7)"/>
<ellipse cx="697.4" cy="843.5" rx="1.8" ry="6.8" fill="#02125c" transform="rotate(8 697.4 843.5)"/>
<ellipse cx="788.4" cy="805.1" rx="1.8" ry="5.9" fill="#02125c" transform="rotate(-21 788.4 805.1)"/>
<ellipse cx="560.7" cy="859.0" rx="2.4" ry="2.4" fill="#02125c" transform="rotate(7 560.7 859.0)"/>
<ellipse cx="580.3" cy="859.7" rx="2.0" ry="3.2" fill="#02125c" transform="rotate(-14 580.3 859.7)"/>
<ellipse cx="776.1" cy="841.7" rx="2.2" ry="4.0" fill="#02125c" transform="rotate(-8 776.1 841.7)"/>
<ellipse cx="840.0" cy="853.8" rx="1.7" ry="4.7" fill="#02125c" transform="rotate(11 840.0 853.8)"/>
<ellipse cx="758.1" cy="873.2" rx="1.5" ry="6.1" fill="#02125c" transform="rotate(8 758.1 873.2)"/>
<ellipse cx="803.9" cy="864.5" rx="2.3" ry="6.4" fill="#02125c" transform="rotate(23 803.9 864.5)"/>
<ellipse cx="736.7" cy="841.9" rx="2.1" ry="6.0" fill="#02125c" transform="rotate(-4 736.7 841.9)"/>
<ellipse cx="667.4" cy="811.7" rx="2.1" ry="7.0" fill="#02125c" transform="rotate(-6 667.4 811.7)"/>
<ellipse cx="587.8" cy="816.3" rx="1.6" ry="3.5" fill="#02125c" transform="rotate(23 587.8 816.3)"/>
<ellipse cx="553.7" cy="824.7" rx="1.0" ry="5.2" fill="#02125c" transform="rotate(14 553.7 824.7)"/>
<ellipse cx="591.5" cy="805.0" rx="1.6" ry="4.9" fill="#02125c" transform="rotate(20 591.5 805.0)"/>
<ellipse cx="546.5" cy="808.7" rx="1.1" ry="3.1" fill="#02125c" transform="rotate(-13 546.5 808.7)"/>
<ellipse cx="760.9" cy="847.6" rx="1.2" ry="2.9" fill="#02125c" transform="rotate(-11 760.9 847.6)"/>
<ellipse cx="589.3" cy="860.6" rx="1.4" ry="4.7" fill="#02125c" transform="rotate(16 589.3 860.6)"/>
<ellipse cx="686.0" cy="820.8" rx="2.4" ry="6.6" fill="#02125c" transform="rotate(-8 686.0 820.8)"/>
<ellipse cx="707.4" cy="876.6" rx="1.7" ry="3.1" fill="#02125c" transform="rotate(-23 707.4 876.6)"/>
<ellipse cx="833.5" cy="864.1" rx="1.5" ry="4.6" fill="#02125c" transform="rotate(1 833.5 864.1)"/>
<ellipse cx="621.5" cy="879.2" rx="2.0" ry="3.2" fill="#02125c" transform="rotate(-24 621.5 879.2)"/>
<ellipse cx="683.9" cy="829.7" rx="2.2" ry="5.6" fill="#02125c" transform="rotate(5 683.9 829.7)"/>
<ellipse cx="584.5" cy="812.6" rx="1.4" ry="3.3" fill="#02125c" transform="rotate(18 584.5 812.6)"/>
<ellipse cx="697.6" cy="851.0" rx="2.6" ry="3.3" fill="#02125c" transform="rotate(2 697.6 851.0)"/>
<ellipse cx="582.5" cy="861.6" rx="0.8" ry="6.1" fill="#02125c" transform="rotate(17 582.5 861.6)"/>
<ellipse cx="794.0" cy="806.6" rx="1.3" ry="5.6" fill="#02125c" transform="rotate(-20 794.0 806.6)"/>
<ellipse cx="686.2" cy="837.5" rx="2.5" ry="4.9" fill="#02125c" transform="rotate(18 686.2 837.5)"/>
<ellipse cx="630.6" cy="863.1" rx="1.6" ry="6.6" fill="#02125c" transform="rotate(-20 630.6 863.1)"/>
<ellipse cx="795.3" cy="816.7" rx="1.8" ry="4.6" fill="#02125c" transform="rotate(-17 795.3 816.7)"/>
<ellipse cx="797.1" cy="824.9" rx="1.4" ry="2.4" fill="#02125c" transform="rotate(-10 797.1 824.9)"/>
<ellipse cx="682.2" cy="857.2" rx="1.4" ry="5.4" fill="#02125c" transform="rotate(-20 682.2 857.2)"/>
<ellipse cx="659.2" cy="836.9" rx="2.5" ry="6.1" fill="#02125c" transform="rotate(8 659.2 836.9)"/>
<ellipse cx="538.9" cy="830.2" rx="2.1" ry="3.2" fill="#02125c" transform="rotate(3 538.9 830.2)"/>
<ellipse cx="679.3" cy="800.8" rx="2.6" ry="6.0" fill="#02125c" transform="rotate(-15 679.3 800.8)"/>
<ellipse cx="729.1" cy="823.2" rx="1.5" ry="4.7" fill="#02125c" transform="rotate(-10 729.1 823.2)"/>
<ellipse cx="641.3" cy="831.4" rx="2.0" ry="3.3" fill="#02125c" transform="rotate(-15 641.3 831.4)"/>
<ellipse cx="765.4" cy="826.4" rx="2.5" ry="4.8" fill="#02125c" transform="rotate(11 765.4 826.4)"/>
<ellipse cx="639.5" cy="866.2" rx="1.0" ry="2.7" fill="#02125c" transform="rotate(-20 639.5 866.2)"/>
<ellipse cx="748.5" cy="856.7" rx="1.1" ry="4.0" fill="#02125c" transform="rotate(17 748.5 856.7)"/>
<ellipse cx="721.7" cy="807.2" rx="1.2" ry="2.8" fill="#02125c" transform="rotate(-19 721.7 807.2)"/>
<ellipse cx="663.2" cy="805.8" rx="2.5" ry="4.1" fill="#02125c" transform="rotate(1 663.2 805.8)"/>
<ellipse cx="738.9" cy="861.3" rx="2.3" ry="3.9" fill="#02125c" transform="rotate(-8 738.9 861.3)"/>
<ellipse cx="664.8" cy="801.2" rx="1.5" ry="5.5" fill="#02125c" transform="rotate(24 664.8 801.2)"/>
<ellipse cx="783.7" cy="852.8" rx="1.9" ry="2.1" fill="#02125c" transform="rotate(-8 783.7 852.8)"/>
<ellipse cx="642.8" cy="852.1" rx="1.0" ry="3.9" fill="#02125c" transform="rotate(0 642.8 852.1)"/>
<ellipse cx="783.4" cy="866.0" rx="1.9" ry="2.8" fill="#02125c" transform="rotate(13 783.4 866.0)"/>
<ellipse cx="819.4" cy="843.9" rx="1.4" ry="4.5" fill="#02125c" transform="rotate(-18 819.4 843.9)"/>
<ellipse cx="759.7" cy="878.9" rx="1.7" ry="5.6" fill="#02125c" transform="rotate(17 759.7 878.9)"/>
<ellipse cx="597.1" cy="875.6" rx="1.9" ry="3.0" fill="#02125c" transform="rotate(-21 597.1 875.6)"/>
<ellipse cx="612.0" cy="846.1" rx="2.1" ry="3.6" fill="#02125c" transform="rotate(21 612.0 846.1)"/>
<ellipse cx="648.8" cy="837.0" rx="1.0" ry="6.9" fill="#02125c" transform="rotate(-18 648.8 837.0)"/>
<ellipse cx="819.8" cy="843.5" rx="1.8" ry="4.8" fill="#02125c" transform="rotate(-12 819.8 843.5)"/>
<ellipse cx="821.4" cy="879.4" rx="2.3" ry="5.0" fill="#02125c" transform="rotate(-19 821.4 879.4)"/>
<ellipse cx="794.8" cy="823.1" rx="2.4" ry="3.2" fill="#02125c" transform="rotate(4 794.8 823.1)"/>
<ellipse cx="796.7" cy="814.8" rx="1.8" ry="2.4" fill="#02125c" transform="rotate(-23 796.7 814.8)"/>
</g></g></svg>
<div id="status" class="a"></div>
<svg class="a" style="left:0;top:0" width="1540" height="1020" viewBox="0 0 1540 1020">
<circle cx="37.9" cy="37.9" r="11.4" stroke="#fff" stroke-width="1.6" fill="none"/>
<path d="M38.6,26.4 L38.6,31" stroke="#fff" stroke-width="1.5" fill="none" stroke-linecap="butt"/>
<path d="M40.5,38.4 L49.4,38.4" stroke="#fff" stroke-width="1.5" fill="none" stroke-linecap="butt"/>
<rect x="26" y="30.5" width="14.9" height="15" rx="1.2" fill="#fff"/>
<path d="M30.4,42.8 V33.4 H34.2 Q37.2,33.4 37.2,36.2 Q37.2,39.1 34.2,39.1 H32.6 V42.8 Z M32.6,35.2 V37.3 H33.9 Q35,37.3 35,36.2 Q35,35.2 33.9,35.2 Z" fill="#c43e1c" fill-rule="evenodd"/>
<circle cx="620.3" cy="33.8" r="6.1" stroke="#a3371c" stroke-width="1.5" fill="none"/>
<path d="M615.8,38.4 L607.6,47.9" stroke="#a3371c" stroke-width="1.5" fill="none" stroke-linecap="round"/>
<circle cx="1285.8" cy="37.8" r="18" fill="#0f4c8c"/>
<path d="M1350.4,37 L1366,37" stroke="#fff" stroke-width="1.5" fill="none" stroke-linecap="butt"/>
<rect x="1423" y="31.2" width="14.00" height="13.80" rx="2.2" stroke="#fff" stroke-width="1.5" fill="none"/>
<path d="M1494.5,30.8 L1509.5,45.5" stroke="#fff" stroke-width="1.5" fill="none" stroke-linecap="butt"/>
<path d="M1509.5,30.8 L1494.5,45.5" stroke="#fff" stroke-width="1.5" fill="none" stroke-linecap="butt"/>
<rect x="1056" y="111.2" width="133.6" height="2.8" rx="1.4" fill="#b7391b"/>
<rect x="1401" y="78" width="119" height="36" rx="5" fill="#c43e1c"/>
<path d="M1420,92.5 H1416 Q1414,92.5 1414,94.5 V102.8 Q1414,104.8 1416,104.8 H1425.5 Q1427.5,104.8 1427.5,102.8 V101.5" stroke="#fff" stroke-width="1.5" fill="none" stroke-linecap="round"/>
<path d="M1418.5,100.5 Q1419.5,93.5 1425,93.3 V89.5 L1430,94.8 L1425,100 V96.6 Q1421,96.6 1418.5,100.5 Z" stroke="#fff" stroke-width="1.4" fill="none" stroke-linejoin="round"/>
<path d="M1503.3,94.8 L1507.1,98.6 L1510.8,94.8" stroke="#fff" stroke-width="1.5" fill="none" stroke-linecap="round" stroke-linejoin="round"/>
<rect x="62.9" y="136.9" width="40.2" height="30.3" fill="#7fbdf0"/>
<rect x="83" y="137.5" width="20" height="29" fill="#fff"/>
<path d="M63.5,160.5 Q72,151 81,152.5 L81,161 Z" fill="#a9dcaa" stroke="#2f9e4d" stroke-width="1.3" stroke-linejoin="round"/>
<path d="M83.5,154 Q87,155 91,151 Q97,146.5 103,151.5 V161 H83.5 Z" fill="#a9dcaa" stroke="#2f9e4d" stroke-width="1.3" stroke-linejoin="round"/>
<rect x="63" y="160.5" width="40" height="1.6" fill="#fff"/>
<rect x="83" y="162.1" width="20" height="5" fill="#7fbdf0"/>
<path d="M63.5,147.5 Q67,147.8 68,145 Q69,141 73.5,141 Q78,141 80,145.5" stroke="#1e6fc8" stroke-width="1.5" fill="none"/>
<rect x="62.9" y="136.9" width="40.20" height="30.30" rx="0" stroke="#3b3b3b" stroke-width="1.5" fill="none"/>
<rect x="80.4" y="132" width="3.8" height="41.8" fill="#fff"/>
<path d="M82.3,132.2 L82.3,173.6" stroke="#8a8a8a" stroke-width="1.4" fill="none" stroke-linecap="butt"/>
<path d="M143.5,135 L143.5,230" stroke="#d6d6d6" stroke-width="1" fill="none" stroke-linecap="butt"/>
<circle cx="200.7" cy="153" r="10" fill="#f8d88c" stroke="#e8760f" stroke-width="1.5"/>
<path d="M213.6,158.4 L220.1,161.0" stroke="#e8760f" stroke-width="1.5" fill="none" stroke-linecap="round"/>
<path d="M206.1,165.9 L208.7,172.4" stroke="#e8760f" stroke-width="1.5" fill="none" stroke-linecap="round"/>
<path d="M195.3,165.9 L192.7,172.4" stroke="#e8760f" stroke-width="1.5" fill="none" stroke-linecap="round"/>
<path d="M187.8,158.4 L181.3,161.0" stroke="#e8760f" stroke-width="1.5" fill="none" stroke-linecap="round"/>
<path d="M187.8,147.6 L181.3,145.0" stroke="#e8760f" stroke-width="1.5" fill="none" stroke-linecap="round"/>
<path d="M195.3,140.1 L192.7,133.6" stroke="#e8760f" stroke-width="1.5" fill="none" stroke-linecap="round"/>
<path d="M206.1,140.1 L208.7,133.6" stroke="#e8760f" stroke-width="1.5" fill="none" stroke-linecap="round"/>
<path d="M213.6,147.6 L220.1,145.0" stroke="#e8760f" stroke-width="1.5" fill="none" stroke-linecap="round"/>
<path d="M196.6,213.7 L200.2,217.6 L203.7,213.7" stroke="#262626" stroke-width="1.5" fill="none" stroke-linecap="round" stroke-linejoin="round"/>
<rect x="259.8" y="134.8" width="22.4" height="16" fill="#b9d7f6"/>
<path d="M259.8,146.2 L266.7,138.8 L272.6,145.6 L276,143.4 L282.2,149.6 V150.8 H259.8 Z" fill="#7db5ea"/>
<path d="M259.8,146.2 L266.7,138.8 L277.5,150.8 M272.6,145.6 L276,143.4 L282.2,149.6" stroke="#1e6fc8" stroke-width="1.4" fill="none"/>
<circle cx="277" cy="138.4" r="1.4" fill="#1e8be0"/>
<rect x="259.8" y="134.8" width="22.40" height="16.00" rx="0" stroke="#1e6fc8" stroke-width="1.5" fill="none"/>
<path d="M339.1,141.0 L342.6,144.8 L346.0,141.0" stroke="#262626" stroke-width="1.5" fill="none" stroke-linecap="round" stroke-linejoin="round"/>
<rect x="259.8" y="174.3" width="22.4" height="15.5" fill="#9ccbf3"/>
<rect x="259.8" y="174.3" width="22.4" height="4" fill="#2a78cf"/>
<path d="M261,180.5 Q262.5,176.5 268,176.8" stroke="#fff" stroke-width="1.6" fill="none"/>
<path d="M260.5,185.2 L268.5,180.5 V185.2 Z" fill="#8fd08f" stroke="#2f9e4d" stroke-width="1"/>
<path d="M271.5,185.5 V182.5 H274.5 V180 H281.5 V185.5 Z" fill="#5cb85c" stroke="#2f9e4d" stroke-width="1"/>
<rect x="272" y="176.5" width="4" height="1.6" fill="#cfe6fb"/><rect x="277" y="178" width="4" height="1.4" fill="#cfe6fb"/>
<rect x="260.5" y="186" width="21" height="1.2" fill="#fff"/>
<rect x="273" y="187.6" width="6" height="1.2" fill="#1e6fc8"/>
<rect x="259.8" y="174.3" width="22.40" height="15.50" rx="0" stroke="#3b3b3b" stroke-width="1.5" fill="none"/>
<rect x="268.2" y="170" width="3.6" height="24" fill="#fff"/>
<path d="M270,170.3 L270,193.8" stroke="#9a9a9a" stroke-width="1.5" fill="none" stroke-linecap="butt"/>
<path d="M406.8,180.0 L410.2,183.8 L413.7,180.0" stroke="#262626" stroke-width="1.5" fill="none" stroke-linecap="round" stroke-linejoin="round"/>
<rect x="259.8" y="213.1" width="9" height="15.7" fill="#c9c8c6" stroke="#a6a5a3" stroke-width="1.5"/>
<path d="M260.5,222 L265,217 L268.5,220.5" stroke="#a6a5a3" stroke-width="1.4" fill="none"/>
<path d="M273,224 L276.8,220.2 L281.5,225.5 V228 H273 Z" fill="#1e6fc8"/>
<path d="M274.5,225.8 L277,223.2 L280.3,226.8" stroke="#7db5ea" stroke-width="1.2" fill="none"/>
<circle cx="277.2" cy="216.6" r="1.5" fill="#e8760f"/>
<path d="M271.5,213.1 H282.2 V228.8 H271.5" stroke="#3b3b3b" stroke-width="1.5" fill="none"/>
<rect x="268.2" y="209" width="3.6" height="24" fill="#fff"/>
<path d="M270,209.3 L270,232.8" stroke="#9a9a9a" stroke-width="1.5" fill="none" stroke-linecap="butt"/>
<path d="M397.6,218.9 L401.2,222.6 L404.9,218.9" stroke="#262626" stroke-width="1.5" fill="none" stroke-linecap="round" stroke-linejoin="round"/>
<rect x="443.3" y="137.3" width="15.10" height="11.10" rx="0" stroke="#3b3b3b" stroke-width="1.5" fill="#f4f4f4"/>
<path d="M444,146 L447.5,141.5 L453,147.8 M451.5,146 L454,143.8 L457.8,147.6" stroke="#3b3b3b" stroke-width="1.1" fill="none"/>
<circle cx="454.8" cy="140.6" r="0.8" fill="#3b3b3b"/>
<path d="M438.8,135.9 H442.6 V132.1" stroke="#1e8be0" stroke-width="1.5" fill="none"/>
<path d="M462.90000000000003,135.9 H459.1 V132.1" stroke="#1e8be0" stroke-width="1.5" fill="none"/>
<path d="M438.8,149.8 H442.6 V153.60000000000002" stroke="#1e8be0" stroke-width="1.5" fill="none"/>
<path d="M462.90000000000003,149.8 H459.1 V153.60000000000002" stroke="#1e8be0" stroke-width="1.5" fill="none"/>
<rect x="440" y="174" width="22" height="16" fill="#f4f4f4"/>
<path d="M439.3,179 V174.2 H462 V189.8 H453" stroke="#3b3b3b" stroke-width="1.5" fill="none"/>
<path d="M445.5,177.8 L455.7,189.3 M452.3,185.6 L457.4,181.6 L462,186.8 M457.5,189.5 L454.3,185" stroke="#3b3b3b" stroke-width="1.3" fill="none"/>
<circle cx="457" cy="177.6" r="1.5" fill="#3b3b3b"/>
<path d="M443.6,178.6 Q439,181 440.2,185.2 Q441.6,189.2 450,188.4" stroke="#1e8be0" stroke-width="1.6" fill="none" stroke-linecap="round"/>
<path d="M446.2,184 L450.6,188.4 L445.8,193" stroke="#1e8be0" stroke-width="1.6" fill="none" stroke-linecap="round" stroke-linejoin="round"/>
<path d="M472.6,180.8 L476.2,184.6 L479.9,180.8" stroke="#262626" stroke-width="1.5" fill="none" stroke-linecap="round" stroke-linejoin="round"/>
<rect x="440" y="213" width="22" height="16" fill="#f4f4f4"/>
<path d="M450.5,213 H462 V228.9 H439.9 V219" stroke="#3b3b3b" stroke-width="1.5" fill="none"/>
<path d="M440.5,222.5 L442,221 M452,224 L456.5,220.3 L462,226.5 M457.5,229 L452.6,223.4" stroke="#3b3b3b" stroke-width="1.3" fill="none"/>
<circle cx="457" cy="216.6" r="1.5" fill="#3b3b3b"/>
<path d="M439.8,214.3 H445 Q450.5,214.8 450.3,221" stroke="#1e8be0" stroke-width="1.6" fill="none" stroke-linecap="round"/>
<path d="M444.6,209.6 L439.8,214.3 L444.6,219.2" stroke="#1e8be0" stroke-width="1.6" fill="none" stroke-linecap="round" stroke-linejoin="round"/>
<path d="M475.4,219.7 L479.1,223.5 L482.8,219.7" stroke="#262626" stroke-width="1.5" fill="none" stroke-linecap="round" stroke-linejoin="round"/>
<path d="M504.5,126 L504.5,260" stroke="#d2d2d2" stroke-width="1" fill="none" stroke-linecap="butt"/>
<path d="M660.5,126 L660.5,260" stroke="#d2d2d2" stroke-width="1" fill="none" stroke-linecap="butt"/>
<path d="M752.5,126 L752.5,260" stroke="#d2d2d2" stroke-width="1" fill="none" stroke-linecap="butt"/>
<path d="M1032.5,126 L1032.5,260" stroke="#d2d2d2" stroke-width="1" fill="none" stroke-linecap="butt"/>
<path d="M1265.5,126 L1265.5,260" stroke="#d2d2d2" stroke-width="1" fill="none" stroke-linecap="butt"/>
<rect x="531" y="137.5" width="40" height="31" fill="#f5f5f5"/>
<path d="M545.7,168.4 H531.1 V137.5 H571.1 V145.2 M571.1,159.5 V168.4 H563" stroke="#3b3b3b" stroke-width="1.5" fill="none"/>
<path d="M531.1,159.6 L541.8,148.3 L554.2,160.4" stroke="#3b3b3b" stroke-width="1.4" fill="none"/>
<path d="M569,161.2 Q571.4,163.5 570.6,166" stroke="#3b3b3b" stroke-width="1.2" fill="none"/>
<circle cx="560.8" cy="143.1" r="2" fill="#3b3b3b"/>
<path d="M554.6,164.2 Q566,152.5 573,148 Q575.6,146.8 574.6,149.4 Q570.5,157.5 558.8,168.6 Z" fill="#fff" stroke="#3b3b3b" stroke-width="1.3" stroke-linejoin="round"/>
<path d="M541.2,172.2 Q546.5,171.6 548.6,168.4 Q551.4,164.2 556,166.2 Q559.4,168.6 557.8,172.4 Q555,177.2 548.4,176.6 Q544,176 541.2,172.2 Z" fill="#7db5ea" stroke="#1e6fc8" stroke-width="1.4" stroke-linejoin="round"/>
<path d="M572.0,213.9 L575.5,217.8 L578.9,213.9" stroke="#262626" stroke-width="1.5" fill="none" stroke-linecap="round" stroke-linejoin="round"/>
<path d="M601.2,146.7 H596.7 V133 H610" stroke="#3b3b3b" stroke-width="1.5" fill="none"/>
<rect x="594.9" y="148.9" width="24" height="5.9" fill="#4472c4"/>
<path d="M602.8,146.8 L604.6,141.6 L614.6,132 Q616.4,130.6 618,132.2 Q619.4,133.8 618,135.4 L608,145 Z" fill="#fff" stroke="#1e8be0" stroke-width="1.3" stroke-linejoin="round"/>
<path d="M602.8,146.8 L604.6,141.6 L608,145 Z" fill="#1e8be0"/>
<path d="M613,133.6 L616.6,137" stroke="#1e8be0" stroke-width="1.2"/>
<path d="M631.8,141.8 L635.4,145.6 L639.0,141.8" stroke="#262626" stroke-width="1.5" fill="none" stroke-linecap="round" stroke-linejoin="round"/>
<path d="M595.6,184.4 L601,173.6 H614.4 L608.3,184.4 Z" fill="#f0f0f0"/>
<path d="M595.6,184.4 H608.3 L612.8,190.4 H599.7 Z" fill="#7a7977"/>
<path d="M608.3,184.4 L614.4,173.6 L618.5,179.4 L612.8,190.4 Z" fill="#c9c8c6"/>
<path d="M595.6,184.4 L601,173.6 H614.4 L618.5,179.4 L612.8,190.4 H599.7 Z M595.6,184.4 H608.3 L614.4,173.6" stroke="#3b3b3b" stroke-width="1.4" fill="none" stroke-linejoin="round"/>
<path d="M628.8,180.7 L632.3,184.6 L635.8,180.7" stroke="#262626" stroke-width="1.5" fill="none" stroke-linecap="round" stroke-linejoin="round"/>
<rect x="595.8" y="210" width="16.4" height="11.4" fill="#f5f5f5"/>
<path d="M595.8,214 V210 H612.2 V221.4 H604.5" stroke="#3b3b3b" stroke-width="1.4" fill="none"/>
<path d="M597.5,212 L607,221 M604.3,218.4 L607.8,215.4 L612,219.8" stroke="#3b3b3b" stroke-width="1.2" fill="none"/>
<circle cx="607.8" cy="212.6" r="0.9" fill="#3b3b3b"/>
<path d="M599.2,217.4 Q594.6,220.4 596.4,224.6 Q598.2,228 605.6,227.6" stroke="#1e8be0" stroke-width="1.6" fill="none" stroke-linecap="round"/>
<path d="M602,223.4 L606.2,227.6 L601.8,232" stroke="#1e8be0" stroke-width="1.6" fill="none" stroke-linecap="round" stroke-linejoin="round"/>
<path d="M607.6,224.6 H613.6 L618.2,228.3 L613.6,232 H606" stroke="#2f9e4d" stroke-width="1.4" fill="#f5f5f5" stroke-linejoin="round"/>
<path d="M628.8,219.7 L632.3,223.6 L635.8,219.7" stroke="#262626" stroke-width="1.5" fill="none" stroke-linecap="round" stroke-linejoin="round"/>
<path d="M651.5,248.89999999999998 H643.6 V256.1" stroke="#3b3b3b" stroke-width="1.4" fill="none"/><path d="M646.5,251.79999999999998 L654.4,259.0 M654.4,253.00000000000003 V259.0 H648.4" stroke="#3b3b3b" stroke-width="1.4" fill="none"/>
<path d="M1256.7,248.89999999999998 H1248.7 V256.1" stroke="#3b3b3b" stroke-width="1.4" fill="none"/><path d="M1251.6,251.79999999999998 L1259.6000000000001,259.0 M1259.6000000000001,253.00000000000003 V259.0 H1253.6000000000001" stroke="#3b3b3b" stroke-width="1.4" fill="none"/>
<rect x="687" y="137.5" width="40" height="30" fill="#f5f5f5"/>
<path d="M699.6,167 H687.2 V137.5 H727.1 V157.3" stroke="#3b3b3b" stroke-width="1.5" fill="none"/>
<path d="M687.2,156.4 L697.9,145.7 L710.2,157.4 L715.8,152.6 L720.8,157.4" stroke="#3b3b3b" stroke-width="1.4" fill="none"/>
<circle cx="718.9" cy="145.6" r="2.6" fill="#3b3b3b"/>
<rect x="702.1" y="160.1" width="27.90" height="15.50" rx="0" stroke="#1e8be0" stroke-width="1.8" fill="#fafafa"/>
<path d="M707,165.9 L724.9,165.9" stroke="#7a7977" stroke-width="1.3" fill="none" stroke-linecap="butt"/>
<path d="M707,170.4 L724.9,170.4" stroke="#7a7977" stroke-width="1.3" fill="none" stroke-linecap="butt"/>
<path d="M790.7,140.6 H794.5 V154.4 H780.4 V150.8" stroke="#b4b4b4" stroke-width="1.4" fill="#f2f2f2"/>
<rect x="772" y="132.1" width="16.40" height="16.00" rx="0" stroke="#b4b4b4" stroke-width="1.5" fill="#dcdcdc"/>
<path d="M931.6,141.7 L935.2,145.3 L938.8,141.7" stroke="#b4b4b4" stroke-width="1.5" fill="none" stroke-linecap="round" stroke-linejoin="round"/>
<rect x="772" y="171.2" width="17.70" height="17.30" rx="0" stroke="#b4b4b4" stroke-width="1.5" fill="#dcdcdc"/>
<rect x="781" y="180.1" width="12.90" height="12.60" rx="0" stroke="#a8a8a8" stroke-width="1.5" fill="#efefef"/>
<path d="M940.8,180.7 L944.4,184.3 L948.0,180.7" stroke="#b4b4b4" stroke-width="1.5" fill="none" stroke-linecap="round" stroke-linejoin="round"/>
<rect x="779.1" y="210" width="15.00" height="12.60" rx="0" stroke="#e8760f" stroke-width="1.5" fill="#f8d88c"/>
<rect x="772" y="220.4" width="10.40" height="11.10" rx="0" stroke="#3b3b3b" stroke-width="1.5" fill="#fafafa"/>
<path d="M784.5,216.6 V231.4 L788,228 L790.4,232.8 L793,231.6 L790.8,227 L795,226.4 Z" fill="#fff" stroke="#fff" stroke-width="3" stroke-linejoin="round"/>
<path d="M784.5,216.6 V231.4 L788,228 L790.4,232.8 L793,231.6 L790.8,227 L795,226.4 Z" fill="#fff" stroke="#3b3b3b" stroke-width="1.3" stroke-linejoin="round"/>
<path d="M967.6,131 L967.6,154.8" stroke="#3b3b3b" stroke-width="1.5" fill="none" stroke-linecap="butt"/>
<rect x="970.9" y="131.9" width="8.90" height="4.30" rx="0" stroke="#3b3b3b" stroke-width="1.4" fill="#f5f5f5"/>
<rect x="970.9" y="139.4" width="19.20" height="5.50" rx="0" stroke="#3b3b3b" stroke-width="1.4" fill="#f5f5f5"/>
<path d="M980.7,151.2 H971 M974.8,147.4 L970.8,151.2 L974.8,155" stroke="#1e8be0" stroke-width="1.5" fill="none" stroke-linecap="round" stroke-linejoin="round"/>
<path d="M1000.8,141.7 L1004.3,145.3 L1007.8,141.7" stroke="#262626" stroke-width="1.5" fill="none" stroke-linecap="round" stroke-linejoin="round"/>
<rect x="969.2" y="172.4" width="13.40" height="13.00" rx="0" stroke="#a4a4a4" stroke-width="1.5" fill="#f0f0f0"/>
<rect x="975.7" y="178.6" width="13.00" height="12.60" rx="0" stroke="#a4a4a4" stroke-width="1.5" fill="#f0f0f0"/>
<rect x="969.2" y="172.4" width="13.40" height="13.00" rx="0" stroke="#a4a4a4" stroke-width="1.5" fill="none"/>
<rect x="967.2" y="170.2" width="2.6" height="2.6" fill="#8a8a8a"/>
<rect x="988.2" y="170.2" width="2.6" height="2.6" fill="#8a8a8a"/>
<rect x="967.2" y="191.2" width="2.6" height="2.6" fill="#8a8a8a"/>
<rect x="988.2" y="191.2" width="2.6" height="2.6" fill="#8a8a8a"/>
<path d="M1000.8,180.7 L1004.3,184.3 L1007.8,180.7" stroke="#b4b4b4" stroke-width="1.5" fill="none" stroke-linecap="round" stroke-linejoin="round"/>
<path d="M969.6,229 H990 V217.8 Z" fill="#f5f5f5" stroke="#3b3b3b" stroke-width="1.5" stroke-linejoin="miter"/>
<path d="M969.6,222 Q966.4,217.4 970,214.8 Q973,213.2 979.6,214.2" stroke="#1e8be0" stroke-width="1.6" fill="none" stroke-linecap="round"/>
<path d="M975,209.6 L980.4,214.3 L975,218.8" stroke="#1e8be0" stroke-width="1.6" fill="none" stroke-linecap="round" stroke-linejoin="round"/>
<path d="M1000.8,219.7 L1004.3,223.3 L1007.8,219.7" stroke="#262626" stroke-width="1.5" fill="none" stroke-linecap="round" stroke-linejoin="round"/>
<path d="M1063.3,132.2 V166 H1096.9 M1055.2,140.3 H1088.8 V173.6 M1063.3,166 L1095.7,133.8" stroke="#3b3b3b" stroke-width="1.5" fill="none"/>
<path d="M1072.0,215.7 L1075.2,219.4 L1078.4,215.7" stroke="#262626" stroke-width="1.5" fill="none" stroke-linecap="round" stroke-linejoin="round"/>
<rect x="1129.9" y="143.8" width="7.30" height="22.40" rx="0" stroke="#3b3b3b" stroke-width="1.4" fill="#f5f5f5"/>
<path d="M1123.3,143.8 H1127.4 M1123.3,166.2 H1127.4" stroke="#3b3b3b" stroke-width="1.3"/>
<path d="M1117.7,144 V166.4 M1114.4,147.4 L1117.7,143.8 L1121,147.4 M1114.4,163 L1117.7,166.6 L1121,163" stroke="#1e8be0" stroke-width="1.5" fill="none" stroke-linecap="round" stroke-linejoin="round"/>
<rect x="1114.9" y="191.9" width="22.20" height="6.90" rx="0" stroke="#3b3b3b" stroke-width="1.4" fill="#f5f5f5"/>
<path d="M1114.9,202 V206 M1137.1,202 V206" stroke="#3b3b3b" stroke-width="1.3"/>
<path d="M1114.6,211.4 H1137.4 M1118,208 L1114.4,211.4 L1118,214.8 M1134,208 L1137.6,211.4 L1134,214.8" stroke="#1e8be0" stroke-width="1.5" fill="none" stroke-linecap="round" stroke-linejoin="round"/>
<rect x="1142.8" y="137.5" width="110.40" height="34.80" rx="5.5" stroke="#8c8c8c" stroke-width="1" fill="#fff"/>
<rect x="1142.8" y="185.8" width="110.40" height="34.30" rx="5.5" stroke="#8c8c8c" stroke-width="1" fill="#fff"/>
<path d="M1235.8,148.8 L1239.4,144.6 L1243,148.8" stroke="#262626" stroke-width="1.3" fill="none" stroke-linecap="round" stroke-linejoin="round"/>
<path d="M1236.4,162.1 L1239.4,165.4 L1242.4,162.1" stroke="#262626" stroke-width="1.3" fill="none" stroke-linecap="round" stroke-linejoin="round"/>
<path d="M1235.8,197 L1239.4,192.8 L1243,197" stroke="#262626" stroke-width="1.3" fill="none" stroke-linecap="round" stroke-linejoin="round"/>
<path d="M1236.4,210.0 L1239.4,213.3 L1242.4,210.0" stroke="#262626" stroke-width="1.3" fill="none" stroke-linecap="round" stroke-linejoin="round"/>
<path d="M1497.6,245.1 L1504.6,252.2 L1511.6,245.1" stroke="#262626" stroke-width="1.5" fill="none" stroke-linecap="round" stroke-linejoin="round"/>
<path d="M26.3,285.6 L48.6,285.6" stroke="#3b3b3b" stroke-width="1.5" fill="none" stroke-linecap="butt"/>
<path d="M28.2,285.6 V296.2 Q28.2,297.8 29.8,297.8 H45.2 Q46.8,297.8 46.8,296.2 V285.6" stroke="#3b3b3b" stroke-width="1.5" fill="none"/>
<path d="M37.5,297.8 L37.5,306.8" stroke="#3b3b3b" stroke-width="1.5" fill="none" stroke-linecap="butt"/>
<path d="M30.6,306.8 L43.9,306.8" stroke="#3b3b3b" stroke-width="1.5" fill="none" stroke-linecap="butt"/>
<path d="M34.9,288.2 V295.1 L40.9,291.6 Z" fill="#2fa04f"/>
<path d="M209,303.6 V288.9 H215.6 L218,291.3 H227 V294.4" stroke="#3b3b3b" stroke-width="1.5" fill="none" stroke-linejoin="round"/>
<path d="M209,303.8 L213.4,294.5 H230.6 L226.4,303.8 Z" stroke="#3b3b3b" stroke-width="1.5" fill="none" stroke-linejoin="round"/>
<path d="M311.8,285.8 H322.6 L328.2,291.4 V308 H311.8 Z M322.6,285.8 V291.4 H328.2" stroke="#3b3b3b" stroke-width="1.5" fill="none" stroke-linejoin="round"/>
<path d="M400.6,285 V295 H410.8" stroke="#3b3b3b" stroke-width="1.5" fill="none"/>
<path d="M400.8,294.8 L407.4,287.4 Q413.2,283 418.4,287 Q423.6,292.6 418,298.8 L408.6,308.2" stroke="#3b3b3b" stroke-width="1.5" fill="none" stroke-linecap="round"/>
<path d="M488.6,293.2 L492.1,297.6 L495.7,293.2" stroke="#262626" stroke-width="1.5" fill="none" stroke-linecap="round" stroke-linejoin="round"/>
<path d="M514,286 H536 V308 H517 L514,305 Z" fill="#d98fdb" stroke="#9b2fa8" stroke-width="1.5" stroke-linejoin="round"/>
<rect x="519.2" y="286" width="11.60" height="8.00" rx="0" stroke="#9b2fa8" stroke-width="1.5" fill="#fff"/>
<rect x="520.6" y="301.6" width="8.80" height="6.40" rx="0" stroke="#9b2fa8" stroke-width="1.5" fill="#fff"/>
<path d="M606.2,285.6 H614.3 V293.6" stroke="#a8a8a8" stroke-width="1.5" fill="none"/>
<path d="M614.3,285.6 L609.8,289.2 A11.4,11.4 0 1 0 624.2,287" stroke="#a8a8a8" stroke-width="1.5" fill="none"/>
<path d="M710.1,292 L720.6,292" stroke="#1a1a1a" stroke-width="2" fill="none" stroke-linecap="butt"/>
<path d="M712.0,296.5 L715.5,299.4 L718.9,296.5" stroke="#1a1a1a" stroke-width="1.6" fill="none" stroke-linecap="round" stroke-linejoin="round"/>
<path d="M126.4,1010 H119 V993.4 H124.5 Q127.6,993.6 128.4,996 Q129.2,993.6 132.3,993.4 H137.8 V1002.8 M128.4,996 V1005.8" stroke="#3d3d3d" stroke-width="1.5" fill="none" stroke-linejoin="round"/>
<path d="M126.6,1008 L131.2,1012 L139,1004.2" stroke="#3d3d3d" stroke-width="1.5" fill="none" stroke-linecap="round" stroke-linejoin="round"/>
<circle cx="311.5" cy="994.5" r="2.3" stroke="#2b2b2b" stroke-width="1.4" fill="none"/>
<path d="M303.2,996.4 Q302.4,998 304,998.6 L308.6,1000.2 Q309.2,1004 307.6,1008 L306.4,1011.4 Q306.2,1013 307.8,1012.8 Q309,1012.6 309.6,1010.6 L311.2,1006.6 L312.6,1008.6 M313.6,1003.6 L314.2,1000.4 L319.4,998.6 Q321,997.8 320,996.4 Q319.2,995.6 317.8,996.2 L313.6,997.6 H309.4 L305.2,996 Q303.8,995.6 303.2,996.4 Z" stroke="#2b2b2b" stroke-width="1.3" fill="none" stroke-linejoin="round" stroke-linecap="round"/>
<path d="M314.4,1004.4 L322.8,1012 M322.8,1004.4 L314.4,1012" stroke="#2b2b2b" stroke-width="1.4" fill="none" stroke-linecap="round"/>
<rect x="989" y="986" width="60" height="32" fill="#dddddd"/>
<rect x="1009.4" y="994.1" width="19.30" height="15.70" rx="0" stroke="#3d3d3d" stroke-width="1.5" fill="none"/>
<path d="M1013.4,994 L1013.4,1010" stroke="#3d3d3d" stroke-width="1.4" fill="none" stroke-linecap="butt"/>
<path d="M1013.4,1006.2 L1028.7,1006.2" stroke="#3d3d3d" stroke-width="1.4" fill="none" stroke-linecap="butt"/>
<rect x="1018.4" y="998.1" width="6.40" height="2.80" rx="0" stroke="#3d3d3d" stroke-width="1.2" fill="none"/>
<rect x="1069.4" y="994.1" width="7.00" height="4.90" rx="0" stroke="#3d3d3d" stroke-width="1.4" fill="none"/>
<rect x="1069.4" y="1005" width="7.00" height="4.90" rx="0" stroke="#3d3d3d" stroke-width="1.4" fill="none"/>
<rect x="1081.5" y="994.1" width="7.00" height="4.90" rx="0" stroke="#3d3d3d" stroke-width="1.4" fill="none"/>
<rect x="1081.5" y="1005" width="7.00" height="4.90" rx="0" stroke="#3d3d3d" stroke-width="1.4" fill="none"/>
<path d="M1138.2,994.6 Q1134.5,991.8 1129.4,992.2 V1007.6 Q1134.5,1007.2 1138.2,1010 Q1141.9,1007.2 1147,1007.6 V992.2 Q1141.9,991.8 1138.2,994.6 Z M1138.2,994.6 V1010" stroke="#3d3d3d" stroke-width="1.4" fill="none" stroke-linejoin="round"/>
<path d="M1131.4,996.4 L1136,996.4" stroke="#3d3d3d" stroke-width="1.1" fill="none" stroke-linecap="butt"/>
<path d="M1140.4,996.4 L1145,996.4" stroke="#3d3d3d" stroke-width="1.1" fill="none" stroke-linecap="butt"/>
<path d="M1131.4,999 L1136,999" stroke="#3d3d3d" stroke-width="1.1" fill="none" stroke-linecap="butt"/>
<path d="M1140.4,999 L1145,999" stroke="#3d3d3d" stroke-width="1.1" fill="none" stroke-linecap="butt"/>
<path d="M1131.4,1001.6 L1136,1001.6" stroke="#3d3d3d" stroke-width="1.1" fill="none" stroke-linecap="butt"/>
<path d="M1140.4,1001.6 L1145,1001.6" stroke="#3d3d3d" stroke-width="1.1" fill="none" stroke-linecap="butt"/>
<path d="M1131.4,1004.2 L1136,1004.2" stroke="#3d3d3d" stroke-width="1.1" fill="none" stroke-linecap="butt"/>
<path d="M1140.4,1004.2 L1145,1004.2" stroke="#3d3d3d" stroke-width="1.1" fill="none" stroke-linecap="butt"/>
<path d="M1188.4,992 L1207.8,992" stroke="#3d3d3d" stroke-width="1.5" fill="none" stroke-linecap="butt"/>
<path d="M1190.8,992 V1001 Q1190.8,1002.6 1192.4,1002.6 H1204.2 Q1205.8,1002.6 1205.8,1001 V992" stroke="#3d3d3d" stroke-width="1.5" fill="none"/>
<path d="M1198.2,1002.6 L1198.2,1010.2" stroke="#3d3d3d" stroke-width="1.5" fill="none" stroke-linecap="butt"/>
<path d="M1193,1010.2 L1203.2,1010.2" stroke="#3d3d3d" stroke-width="1.5" fill="none" stroke-linecap="butt"/>
<path d="M1194.6,996.6 L1201.6,996.6" stroke="#3d3d3d" stroke-width="1.3" fill="none" stroke-linecap="butt"/>
<path d="M1237,1001.8 L1248.5,1001.8" stroke="#3d3d3d" stroke-width="1.3" fill="none" stroke-linecap="butt"/>
<path d="M1256.7,1001.8 L1405,1001.8" stroke="#6a6a6a" stroke-width="1.6" fill="none" stroke-linecap="butt"/>
<rect x="1295" y="992.8" width="8" height="17.2" fill="#666"/>
<path d="M1330.8,998 L1330.8,1006" stroke="#6a6a6a" stroke-width="1.4" fill="none" stroke-linecap="butt"/>
<path d="M1413.2,1001.8 L1424.4,1001.8" stroke="#3d3d3d" stroke-width="1.3" fill="none" stroke-linecap="butt"/>
<path d="M1418.8,996 L1418.8,1007.5" stroke="#3d3d3d" stroke-width="1.3" fill="none" stroke-linecap="butt"/>
<rect x="1498.9" y="997.1" width="9.00" height="8.60" rx="0" stroke="#3d3d3d" stroke-width="1.4" fill="none"/>
<path d="M1499.4,993.8 L1503.3,990.4 L1507.2,993.8 M1499.4,1008.6 L1503.3,1012 L1507.2,1008.6 M1495.6,997.6 L1492.4,1001.4 L1495.6,1005.2 M1511,997.6 L1514.2,1001.4 L1511,1005.2" stroke="#3d3d3d" stroke-width="1.4" fill="none" stroke-linecap="round" stroke-linejoin="round"/>
<path d="M22.2,352.6 L27.2,349 V364.2" stroke="#c8472a" stroke-width="1.9" fill="none" stroke-linejoin="miter"/>
<rect x="530.5" y="448.5" width="771" height="434" fill="none" stroke="#686868" stroke-width="1"/>
<path d="M916.5,413 V441" stroke="#686868" stroke-width="1"/>
<circle cx="530.5" cy="448.5" r="6.9" fill="#fff" stroke="#666" stroke-width="2.7"/>
<circle cx="916.2" cy="448.5" r="6.9" fill="#fff" stroke="#666" stroke-width="2.7"/>
<circle cx="1301.5" cy="448.5" r="6.9" fill="#fff" stroke="#666" stroke-width="2.7"/>
<circle cx="530.5" cy="665.4" r="6.9" fill="#fff" stroke="#666" stroke-width="2.7"/>
<circle cx="1301.5" cy="665.4" r="6.9" fill="#fff" stroke="#666" stroke-width="2.7"/>
<circle cx="530.5" cy="882.5" r="6.9" fill="#fff" stroke="#666" stroke-width="2.7"/>
<circle cx="916.2" cy="882.5" r="6.9" fill="#fff" stroke="#666" stroke-width="2.7"/>
<circle cx="1301.5" cy="882.5" r="6.9" fill="#fff" stroke="#666" stroke-width="2.7"/>
<path d="M923.13,406.77 A11.25,11.25 0 1 1 927.45,396.90" stroke="#686868" stroke-width="9.2" fill="none"/>
<path d="M915.2,394.6 H940.6 L927.5,408.6 Z" fill="#686868"/>
<path d="M923.13,406.77 A11.25,11.25 0 1 1 927.45,396.90 V398.5" stroke="#fff" stroke-width="2.6" fill="none"/>
<path d="M920.8,397.4 H934 L927.5,404.6 Z" fill="#fff"/>
</svg>
<span class="t" style="left:71.8px;top:30px;font-size:18.3px;color:#ffffff;transform:scaleX(0.9459)">Presentation1</span>
<span class="t" style="left:191.0px;top:30px;font-size:18.3px;color:#ffffff;transform:scaleX(1.0000)">-</span>
<span class="t" style="left:206.9px;top:30px;font-size:18.3px;color:#ffffff;transform:scaleX(0.9437)">PowerPoint</span>
<span class="t" style="left:648.6px;top:29px;font-size:20.3px;color:#a3371c;transform:scaleX(0.9066)">Search</span>
<span class="t" style="left:1132.1px;top:30px;font-size:18.3px;color:#ffffff;transform:scaleX(0.9237)">Daniel Uchenna</span>
<span class="t" style="left:1274.7px;top:30px;font-size:16.3px;color:#e4ecf6;transform:scaleX(0.9376)">DU</span>
<span class="t" style="left:34.1px;top:88px;font-size:20.3px;color:#262626;transform:scaleX(0.9156)">File</span>
<span class="t" style="left:102.8px;top:88px;font-size:20.3px;color:#262626;transform:scaleX(0.9939)">Home</span>
<span class="t" style="left:187.1px;top:88px;font-size:20.3px;color:#262626;transform:scaleX(0.9284)">Insert</span>
<span class="t" style="left:266.0px;top:88px;font-size:20.3px;color:#262626;transform:scaleX(0.9614)">Design</span>
<span class="t" style="left:357.5px;top:88px;font-size:20.3px;color:#262626;transform:scaleX(0.9334)">Transitions</span>
<span class="t" style="left:481.2px;top:88px;font-size:20.3px;color:#262626;transform:scaleX(0.9857)">Animations</span>
<span class="t" style="left:611.2px;top:88px;font-size:20.3px;color:#262626;transform:scaleX(0.9453)">Slide Show</span>
<span class="t" style="left:736.1px;top:88px;font-size:20.3px;color:#262626;transform:scaleX(0.9390)">Record</span>
<span class="t" style="left:826.1px;top:88px;font-size:20.3px;color:#262626;transform:scaleX(0.8997)">Review</span>
<span class="t" style="left:916.2px;top:88px;font-size:20.3px;color:#262626;transform:scaleX(0.9273)">View</span>
<span class="t" style="left:987.0px;top:88px;font-size:20.3px;color:#262626;transform:scaleX(0.9646)">Help</span>
<span class="t" style="left:1055.6px;top:88px;font-size:20.3px;color:#b7391b;transform:scaleX(1.0004);-webkit-text-stroke:0.6px #b7391b">Picture Format</span>
<span class="t" style="left:1437.7px;top:87px;font-size:20.3px;color:#ffffff;transform:scaleX(0.9045)">Share</span>
<span class="t" style="left:51.2px;top:184px;font-size:18.3px;color:#262626;transform:scaleX(0.9401)">Remove</span>
<span class="t" style="left:34.9px;top:208px;font-size:18.3px;color:#262626;transform:scaleX(0.9749)">Background</span>
<span class="t" style="left:156.5px;top:184px;font-size:18.3px;color:#262626;transform:scaleX(0.9515)">Corrections</span>
<span class="t" style="left:289.4px;top:135px;font-size:18.3px;color:#262626;transform:scaleX(0.9771)">Color</span>
<span class="t" style="left:289.4px;top:174px;font-size:18.3px;color:#262626;transform:scaleX(0.9503)">Artistic Effects</span>
<span class="t" style="left:289.4px;top:213px;font-size:18.3px;color:#262626;transform:scaleX(0.8986)">Transparency</span>
<span class="t" style="left:240.5px;top:246px;font-size:16.3px;color:#262626;transform:scaleX(0.9535)">Adjust</span>
<span class="t" style="left:529.5px;top:184px;font-size:18.3px;color:#262626;transform:scaleX(0.9330)">Quick</span>
<span class="t" style="left:520.8px;top:208px;font-size:18.3px;color:#262626;transform:scaleX(0.8722)">Styles</span>
<span class="t" style="left:523.8px;top:245px;font-size:16.3px;color:#262626;transform:scaleX(0.9208)">Picture Styles</span>
<span class="t" style="left:664.8px;top:246px;font-size:16.3px;color:#262626;transform:scaleX(0.9238)">Accessibility</span>
<span class="t" style="left:696.4px;top:184px;font-size:18.3px;color:#262626;transform:scaleX(1.0115)">Alt</span>
<span class="t" style="left:692.4px;top:208px;font-size:18.3px;color:#262626;transform:scaleX(0.8850)">Text</span>
<span class="t" style="left:800.9px;top:135px;font-size:18.3px;color:#b4b4b4;transform:scaleX(0.9686)">Bring Forward</span>
<span class="t" style="left:801.9px;top:174px;font-size:18.3px;color:#b4b4b4;transform:scaleX(0.9309)">Send Backward</span>
<span class="t" style="left:801.9px;top:213px;font-size:18.3px;color:#262626;transform:scaleX(0.9136)">Selection Pane</span>
<span class="t" style="left:864.2px;top:246px;font-size:16.3px;color:#262626;transform:scaleX(0.9695)">Arrange</span>
<span class="t" style="left:1056.3px;top:186px;font-size:18.3px;color:#262626;transform:scaleX(0.9580)">Crop</span>
<span class="t" style="left:1145.6px;top:147px;font-size:18.3px;color:#262626;transform:scaleX(0.9585)">13.09 cm</span>
<span class="t" style="left:1145.6px;top:195px;font-size:18.3px;color:#262626;transform:scaleX(0.9591)">23.28 cm</span>
<span class="t" style="left:1123.8px;top:245px;font-size:16.3px;color:#262626;transform:scaleX(0.8603)">Size</span>
<span class="t" style="left:56.0px;top:287px;font-size:18.3px;color:#262626;transform:scaleX(0.9773)">From Beginning</span>
<span class="t" style="left:238.3px;top:287px;font-size:18.3px;color:#262626;transform:scaleX(0.9919)">Open</span>
<span class="t" style="left:338.1px;top:287px;font-size:18.3px;color:#262626;transform:scaleX(0.9431)">New</span>
<span class="t" style="left:429.0px;top:287px;font-size:18.3px;color:#262626;transform:scaleX(0.9874)">Undo</span>
<span class="t" style="left:543.8px;top:287px;font-size:18.3px;color:#262626;transform:scaleX(0.8723)">Save</span>
<span class="t" style="left:636.1px;top:287px;font-size:18.3px;color:#b4b4b4;transform:scaleX(0.9239)">Redo</span>
<span class="t" style="left:13.0px;top:994px;font-size:16.3px;color:#3a3a3a;transform:scaleX(0.9459)">Slide 1 of 1</span>
<span class="t" style="left:163.7px;top:994px;font-size:16.3px;color:#3a3a3a;transform:scaleX(0.9536)">English (Nigeria)</span>
<span class="t" style="left:329.0px;top:995px;font-size:16px;color:#262626;transform:scaleX(0.9802);font-weight:700">Accessibility: Investigate</span>
<span class="t" style="left:1442.4px;top:994px;font-size:16.3px;color:#3a3a3a;transform:scaleX(0.9561)">59%</span>
<div class="a" style="left:0;top:0;width:2px;height:1020px;background:#c43e1c"></div>
<div class="a" style="left:1538px;top:0;width:2px;height:1020px;background:#c43e1c"></div>
<div class="a" style="left:0;top:1018px;width:1540px;height:2px;background:#c43e1c"></div>
</div>
</body></html>
